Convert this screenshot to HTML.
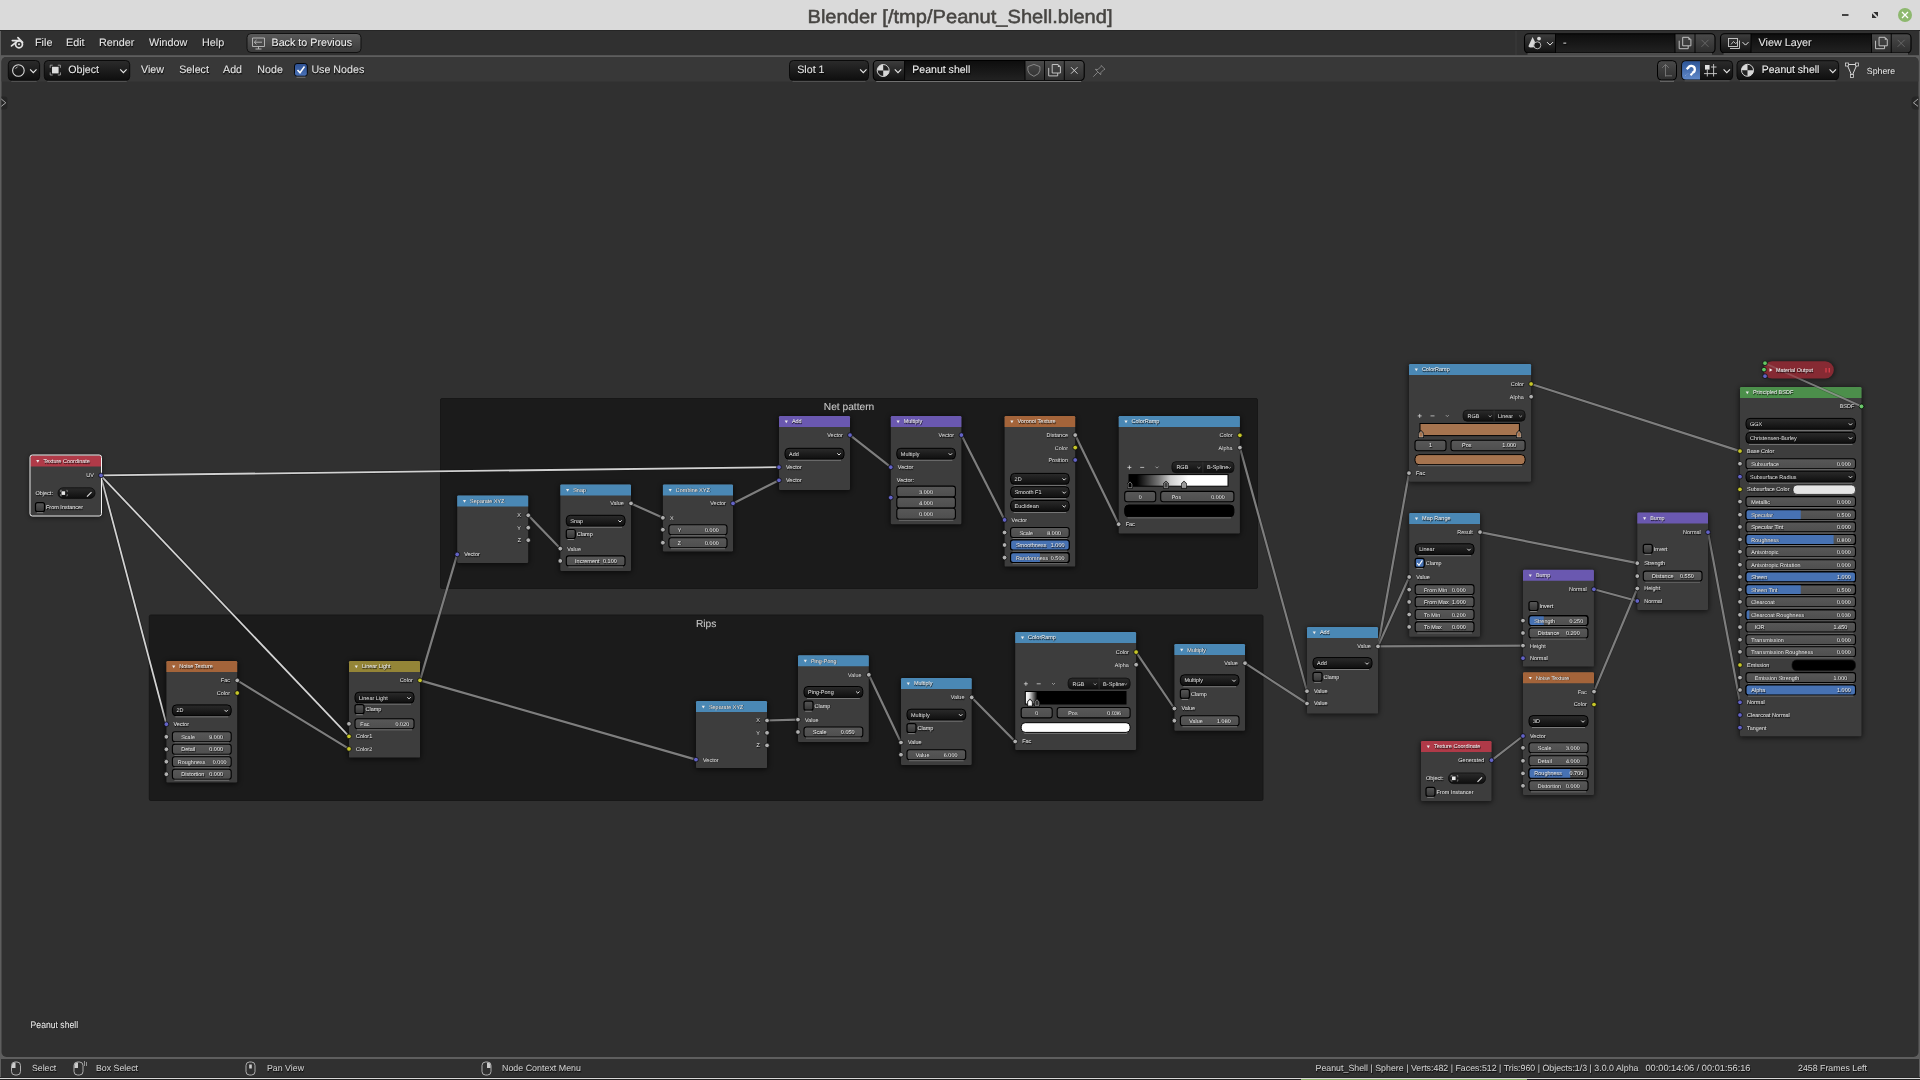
<!DOCTYPE html>
<html><head><meta charset="utf-8"><title>Blender</title>
<style>
html,body{margin:0;padding:0;background:#303030;width:1920px;height:1080px;overflow:hidden}
svg{display:block;font-family:"Liberation Sans", sans-serif;will-change:transform;text-rendering:geometricPrecision}
</style></head><body>
<svg width="1920" height="1080" viewBox="0 0 1920 1080">
<defs>
<linearGradient id="gdrop" x1="0" y1="0" x2="0" y2="1"><stop offset="0" stop-color="#2b2b2b"/><stop offset="1" stop-color="#0e0e0e"/></linearGradient>
<linearGradient id="gfield" x1="0" y1="0" x2="0" y2="1"><stop offset="0" stop-color="#585858"/><stop offset="1" stop-color="#4e4e4e"/></linearGradient>
<linearGradient id="gcheck" x1="0" y1="0" x2="0" y2="1"><stop offset="0" stop-color="#575757"/><stop offset="1" stop-color="#353535"/></linearGradient>
<linearGradient id="gbtn" x1="0" y1="0" x2="0" y2="1"><stop offset="0" stop-color="#5a5a5a"/><stop offset="1" stop-color="#3a3a3a"/></linearGradient>
<linearGradient id="gdrop2" x1="0" y1="0" x2="0" y2="1"><stop offset="0" stop-color="#3e3e3e"/><stop offset="1" stop-color="#111"/></linearGradient>
<linearGradient id="gname" x1="0" y1="0" x2="0" y2="1"><stop offset="0" stop-color="#0d0d0d"/><stop offset="1" stop-color="#222"/></linearGradient>
<linearGradient id="gblue" x1="0" y1="0" x2="0" y2="1"><stop offset="0" stop-color="#2d5597"/><stop offset="1" stop-color="#6089c9"/></linearGradient>
<linearGradient id="gblue2" x1="0" y1="0" x2="0" y2="1"><stop offset="0" stop-color="#2d5092"/><stop offset="1" stop-color="#4a72b8"/></linearGradient>
<linearGradient id="gbtn2" x1="0" y1="0" x2="0" y2="1"><stop offset="0" stop-color="#4a4a4a"/><stop offset="1" stop-color="#2e2e2e"/></linearGradient>
<linearGradient id="gcr1" x1="0" y1="0" x2="1" y2="0"><stop offset="0" stop-color="#000"/><stop offset="0.08" stop-color="#000"/><stop offset="0.3" stop-color="#777"/><stop offset="0.42" stop-color="#cfcfcf"/><stop offset="0.6" stop-color="#fff"/><stop offset="1" stop-color="#fff"/></linearGradient>
<linearGradient id="gcr2" x1="0" y1="0" x2="1" y2="0"><stop offset="0" stop-color="#fff"/><stop offset="0.04" stop-color="#ddd"/><stop offset="0.12" stop-color="#000"/><stop offset="1" stop-color="#000"/></linearGradient>
<filter id="shadow" x="-20%" y="-20%" width="140%" height="140%"><feGaussianBlur stdDeviation="2.5"/></filter>
</defs>
<rect x="0" y="0" width="1920" height="1080" fill="#303030"/>
<rect x="0" y="0" width="1920" height="30" fill="#dadada"/>
<text x="960.00" y="22.50" font-size="19" text-anchor="middle" textLength="305" lengthAdjust="spacingAndGlyphs" fill="#474542" stroke="#474542" stroke-width="0.51" >Blender [/tmp/Peanut_Shell.blend]</text>
<path d="M1842 15 h6.5" stroke="#333" stroke-width="1.8"/>
<path d="M1873.3 12 H1878 V16.7 Z M1872 13.3 V18 H1876.7 Z" fill="#303030"/>
<circle cx="1905" cy="15" r="7" fill="#8db86e"/>
<path d="M1902 12 L1908 18 M1908 12 L1902 18" stroke="#fff" stroke-width="1.3"/>
<rect x="0" y="30" width="1920" height="1048" fill="#5e5e5e"/>
<rect x="1" y="30" width="1918" height="25.2" fill="#303030"/><rect x="0" y="30" width="1920" height="1" fill="#252525"/>
<rect x="1.5" y="57" width="1917" height="1000" rx="5" fill="#303030"/>
<path d="M1.5 81.5 V62 Q1.5 57 6.5 57 H1913.5 Q1918.5 57 1918.5 62 V81.5 Z" fill="#383838"/>
<g fill="none" stroke="#e2e2e2" stroke-linecap="round"><circle cx="19" cy="44.3" r="3.45" stroke-width="1.75"/><circle cx="19" cy="44.3" r="1.05" fill="#e2e2e2" stroke="none"/><path d="M17.9 37.6 L22.6 42.4 M12.3 40.6 H18.8 M11.5 45.9 L15.9 42.5" stroke-width="1.65"/></g>
<text x="35.45" y="46.50" font-size="10.8" text-anchor="start" fill="#000" fill-opacity="0.6" stroke="#000" stroke-opacity="0.25" stroke-width="1.30" >File</text><text x="35.00" y="45.90" font-size="10.8" text-anchor="start" fill="#e6e6e6" stroke="#e6e6e6" stroke-width="0.09" >File</text>
<text x="66.45" y="46.50" font-size="10.8" text-anchor="start" fill="#000" fill-opacity="0.6" stroke="#000" stroke-opacity="0.25" stroke-width="1.30" >Edit</text><text x="66.00" y="45.90" font-size="10.8" text-anchor="start" fill="#e6e6e6" stroke="#e6e6e6" stroke-width="0.09" >Edit</text>
<text x="99.45" y="46.50" font-size="10.8" text-anchor="start" fill="#000" fill-opacity="0.6" stroke="#000" stroke-opacity="0.25" stroke-width="1.30" >Render</text><text x="99.00" y="45.90" font-size="10.8" text-anchor="start" fill="#e6e6e6" stroke="#e6e6e6" stroke-width="0.09" >Render</text>
<text x="149.45" y="46.50" font-size="10.8" text-anchor="start" fill="#000" fill-opacity="0.6" stroke="#000" stroke-opacity="0.25" stroke-width="1.30" >Window</text><text x="149.00" y="45.90" font-size="10.8" text-anchor="start" fill="#e6e6e6" stroke="#e6e6e6" stroke-width="0.09" >Window</text>
<text x="202.45" y="46.50" font-size="10.8" text-anchor="start" fill="#000" fill-opacity="0.6" stroke="#000" stroke-opacity="0.25" stroke-width="1.30" >Help</text><text x="202.00" y="45.90" font-size="10.8" text-anchor="start" fill="#e6e6e6" stroke="#e6e6e6" stroke-width="0.09" >Help</text>
<rect x="247" y="33.5" width="114" height="19" rx="4" fill="url(#gbtn)" stroke="#111" stroke-width="1"/>
<path d="M252.5 38 h12 v8.5 h-12 Z M258.5 46.5 v2.5 M255.5 49 h6 M262 42.2 h-7.5 M256.5 40 l-2.2 2.2 l2.2 2.2" stroke="#bdbdbd" stroke-width="0.9" fill="none"/>
<text x="271.95" y="46.50" font-size="10.8" text-anchor="start" textLength="80.5" lengthAdjust="spacingAndGlyphs" fill="#000" fill-opacity="0.6" stroke="#000" stroke-opacity="0.25" stroke-width="1.30" >Back to Previous</text><text x="271.50" y="45.90" font-size="10.8" text-anchor="start" textLength="80.5" lengthAdjust="spacingAndGlyphs" fill="#f0f0f0" stroke="#f0f0f0" stroke-width="0.09" >Back to Previous</text>
<path d="M1516 31 V55" stroke="#3a3a3a" stroke-width="1"/>
<clipPath id="idc20"><rect x="1524.5" y="33.7" width="190.5" height="19.299999999999997" rx="4"/></clipPath>
<g clip-path="url(#idc20)"><rect x="1524.5" y="33.7" width="31.0" height="19.299999999999997" fill="url(#gdrop2)"/><rect x="1555.5" y="33.7" width="119.5" height="19.299999999999997" fill="url(#gname)"/><rect x="1675" y="33.7" width="40" height="19.299999999999997" fill="url(#gbtn2)"/></g>
<rect x="1524.5" y="33.7" width="190.5" height="19.299999999999997" rx="4" fill="none" stroke="#000" stroke-width="1.1"/>
<path d="M1555.5 33.7 V53 M1675 33.7 V53 M1695.0 33.7 V53" stroke="#000" stroke-width="0.9"/>
<path d="M1527.5 53.9 H1712" stroke="#8a8a8a" stroke-width="0.8"/>
<path d="M1679.2 40.699999999999996 V48.699999999999996 H1688.2 V45.9" stroke="#c8c8c8" stroke-width="0.95" fill="none"/><path d="M1682.7 37.3 H1688.6 L1690.9 39.599999999999994 V45.8 H1682.7 Z" stroke="#c8c8c8" stroke-width="0.95" fill="none"/><path d="M1688.4 37.3 L1690.9 39.8 H1688.4 Z" fill="#c8c8c8"/>
<path d="M1701.5 39.8 L1708.5 46.8 M1708.5 39.8 L1701.5 46.8" stroke="#6a6a6a" stroke-width="0.9"/>
<path d="M1547.0 42.099999999999994 l3 3 l3 -3" stroke="#e8e8e8" stroke-width="1" fill="none"/>
<text x="1563.45" y="46.70" font-size="10.8" text-anchor="start" fill="#000" fill-opacity="0.6" stroke="#000" stroke-opacity="0.25" stroke-width="1.30" >-</text><text x="1563.00" y="46.10" font-size="10.8" text-anchor="start" fill="#e6e6e6" stroke="#e6e6e6" stroke-width="0.09" >-</text>
<clipPath id="idc29"><rect x="1720.5" y="33.7" width="190.5" height="19.299999999999997" rx="4"/></clipPath>
<g clip-path="url(#idc29)"><rect x="1720.5" y="33.7" width="30.5" height="19.299999999999997" fill="url(#gdrop2)"/><rect x="1751" y="33.7" width="120.5" height="19.299999999999997" fill="url(#gname)"/><rect x="1871.5" y="33.7" width="39.5" height="19.299999999999997" fill="url(#gbtn2)"/></g>
<rect x="1720.5" y="33.7" width="190.5" height="19.299999999999997" rx="4" fill="none" stroke="#000" stroke-width="1.1"/>
<path d="M1751 33.7 V53 M1871.5 33.7 V53 M1891.25 33.7 V53" stroke="#000" stroke-width="0.9"/>
<path d="M1723.5 53.9 H1908" stroke="#8a8a8a" stroke-width="0.8"/>
<path d="M1875.575 40.699999999999996 V48.699999999999996 H1884.575 V45.9" stroke="#c8c8c8" stroke-width="0.95" fill="none"/><path d="M1879.075 37.3 H1884.975 L1887.275 39.599999999999994 V45.8 H1879.075 Z" stroke="#c8c8c8" stroke-width="0.95" fill="none"/><path d="M1884.775 37.3 L1887.275 39.8 H1884.775 Z" fill="#c8c8c8"/>
<path d="M1897.625 39.8 L1904.625 46.8 M1904.625 39.8 L1897.625 46.8" stroke="#6a6a6a" stroke-width="0.9"/>
<path d="M1742.5 42.099999999999994 l3 3 l3 -3" stroke="#e8e8e8" stroke-width="1" fill="none"/>
<text x="1758.95" y="46.70" font-size="10.8" text-anchor="start" fill="#000" fill-opacity="0.6" stroke="#000" stroke-opacity="0.25" stroke-width="1.30" >View Layer</text><text x="1758.50" y="46.10" font-size="10.8" text-anchor="start" fill="#e6e6e6" stroke="#e6e6e6" stroke-width="0.09" >View Layer</text>
<g fill="#d8d8d8"><path d="M1528.5 46 Q1528.3 47.3 1530.5 47.5 L1534.2 47.3 L1536 44 L1532.6 37 Z"/><circle cx="1539" cy="38.6" r="1.9"/><circle cx="1537.3" cy="45.3" r="3.5" fill="#181818" stroke="#c8c8c8" stroke-width="0.9"/></g>
<g fill="none" stroke="#d0d0d0" stroke-width="0.9"><rect x="1728.5" y="38.5" width="9" height="8"/><path d="M1730 48.5 h9.5 v-8 M1731 44.5 l2.5 -3 l2 2 l1.5 -1"/></g>
<rect x="8.3" y="60.5" width="31.3" height="20.0" rx="4" fill="url(#gdrop)" stroke="#0a0a0a" stroke-width="1"/>
<path d="M11.3 81.3 H36.6" stroke="#5d5d5d" stroke-width="0.9"/>
<path d="M30.099999999999998 69.4 L33.3 72.6 L36.5 69.4" stroke="#e8e8e8" stroke-width="1.1" fill="none"/>
<circle cx="18.4" cy="70.5" r="5.8" fill="none" stroke="#d8d8d8" stroke-width="1.1"/><path d="M15.5 68.5 l1.5 -1.2 M17.5 67 l0.6 -0.3" stroke="#d8d8d8" stroke-width="0.8"/>
<rect x="44.3" y="60.5" width="85.39999999999999" height="20.0" rx="4" fill="url(#gdrop)" stroke="#0a0a0a" stroke-width="1"/>
<path d="M47.3 81.3 H126.69999999999999" stroke="#5d5d5d" stroke-width="0.9"/>
<path d="M120.2 69.4 L123.4 72.6 L126.60000000000001 69.4" stroke="#e8e8e8" stroke-width="1.1" fill="none"/>
<rect x="52" y="66.8" width="6.6" height="6.6" fill="#dcdcdc"/><path d="M50.2 67.8 v-2.6 h2.5 M57.8 65.2 h2.6 v2.6 M50.2 72.4 v2.6 h2.5 M57.8 75 h2.6 v-2.6" stroke="#b0b0b0" stroke-width="0.8" fill="none"/>
<text x="68.65" y="73.60" font-size="10.7" text-anchor="start" fill="#000" fill-opacity="0.6" stroke="#000" stroke-opacity="0.25" stroke-width="1.28" >Object</text><text x="68.20" y="73.00" font-size="10.7" text-anchor="start" fill="#e6e6e6" stroke="#e6e6e6" stroke-width="0.09" >Object</text>
<text x="141.45" y="73.60" font-size="10.7" text-anchor="start" fill="#000" fill-opacity="0.6" stroke="#000" stroke-opacity="0.25" stroke-width="1.28" >View</text><text x="141.00" y="73.00" font-size="10.7" text-anchor="start" fill="#e6e6e6" stroke="#e6e6e6" stroke-width="0.09" >View</text>
<text x="179.65" y="73.60" font-size="10.7" text-anchor="start" fill="#000" fill-opacity="0.6" stroke="#000" stroke-opacity="0.25" stroke-width="1.28" >Select</text><text x="179.20" y="73.00" font-size="10.7" text-anchor="start" fill="#e6e6e6" stroke="#e6e6e6" stroke-width="0.09" >Select</text>
<text x="223.45" y="73.60" font-size="10.7" text-anchor="start" fill="#000" fill-opacity="0.6" stroke="#000" stroke-opacity="0.25" stroke-width="1.28" >Add</text><text x="223.00" y="73.00" font-size="10.7" text-anchor="start" fill="#e6e6e6" stroke="#e6e6e6" stroke-width="0.09" >Add</text>
<text x="257.75" y="73.60" font-size="10.7" text-anchor="start" fill="#000" fill-opacity="0.6" stroke="#000" stroke-opacity="0.25" stroke-width="1.28" >Node</text><text x="257.30" y="73.00" font-size="10.7" text-anchor="start" fill="#e6e6e6" stroke="#e6e6e6" stroke-width="0.09" >Node</text>
<rect x="294.5" y="63.5" width="12.8" height="12.7" rx="2.5" fill="url(#gblue2)" stroke="#000" stroke-width="0.9"/><path d="M296.5 77.2 H305.5" stroke="#8a8a8a" stroke-width="0.8"/>
<path d="M297.5 70 L300 72.8 L304.5 66.5" stroke="#fff" stroke-width="1.5" fill="none"/>
<text x="311.85" y="73.60" font-size="10.7" text-anchor="start" fill="#000" fill-opacity="0.6" stroke="#000" stroke-opacity="0.25" stroke-width="1.28" >Use Nodes</text><text x="311.40" y="73.00" font-size="10.7" text-anchor="start" fill="#e6e6e6" stroke="#e6e6e6" stroke-width="0.09" >Use Nodes</text>
<rect x="789.5" y="60.5" width="79.0" height="20.0" rx="4" fill="url(#gdrop)" stroke="#0a0a0a" stroke-width="1"/>
<path d="M792.5 81.3 H865.5" stroke="#5d5d5d" stroke-width="0.9"/>
<path d="M860.0999999999999 69.4 L863.3 72.6 L866.5 69.4" stroke="#e8e8e8" stroke-width="1.1" fill="none"/>
<text x="797.65" y="73.60" font-size="10.7" text-anchor="start" fill="#000" fill-opacity="0.6" stroke="#000" stroke-opacity="0.25" stroke-width="1.28" >Slot 1</text><text x="797.20" y="73.00" font-size="10.7" text-anchor="start" fill="#e6e6e6" stroke="#e6e6e6" stroke-width="0.09" >Slot 1</text>
<clipPath id="idc60"><rect x="873.3" y="60.5" width="210.9000000000001" height="20.0" rx="4"/></clipPath>
<g clip-path="url(#idc60)"><rect x="873.3" y="60.5" width="31.300000000000068" height="20.0" fill="url(#gdrop2)"/><rect x="904.6" y="60.5" width="120.39999999999998" height="20.0" fill="url(#gname)"/><rect x="1025" y="60.5" width="59.200000000000045" height="20.0" fill="url(#gbtn2)"/></g>
<rect x="873.3" y="60.5" width="210.9000000000001" height="20.0" rx="4" fill="none" stroke="#000" stroke-width="1.1"/>
<path d="M904.6 60.5 V80.5 M1025 60.5 V80.5 M1044.5 60.5 V80.5 M1064.3 60.5 V80.5" stroke="#000" stroke-width="0.9"/>
<path d="M876.3 81.4 H1081.2" stroke="#8a8a8a" stroke-width="0.8"/>
<circle cx="883.2" cy="70.5" r="6" fill="#222" stroke="#d8d8d8" stroke-width="1"/><path d="M883.2 64.5 A6 6 0 0 0 877.2 70.5 H883.2 Z M883.2 70.5 H889.2 A6 6 0 0 1 883.2 76.5 Z" fill="#d8d8d8"/>
<path d="M894.8 69.4 L898 72.6 L901.2 69.4" stroke="#e8e8e8" stroke-width="1.1" fill="none"/>
<text x="912.75" y="73.60" font-size="10.7" text-anchor="start" textLength="58" lengthAdjust="spacingAndGlyphs" fill="#000" fill-opacity="0.6" stroke="#000" stroke-opacity="0.25" stroke-width="1.28" >Peanut shell</text><text x="912.30" y="73.00" font-size="10.7" text-anchor="start" textLength="58" lengthAdjust="spacingAndGlyphs" fill="#f0f0f0" stroke="#f0f0f0" stroke-width="0.09" >Peanut shell</text>
<path d="M1033.9 64.4 L1039.9 66.6 V70.3 Q1039.9 74 1033.9 76.3 Q1027.9 74 1027.9 70.3 V66.6 Z" stroke="#8a8a8a" stroke-width="0.95" fill="none"/>
<path d="M1048.7 67.9 V75.9 H1057.7 V73.1" stroke="#c8c8c8" stroke-width="0.95" fill="none"/><path d="M1052.2 64.5 H1058.1 L1060.4 66.8 V73.0 H1052.2 Z" stroke="#c8c8c8" stroke-width="0.95" fill="none"/><path d="M1057.9 64.5 L1060.4 67.0 H1057.9 Z" fill="#c8c8c8"/>
<path d="M1071 67.2 L1077.5 73.7 M1077.5 67.2 L1071 73.7" stroke="#d0d0d0" stroke-width="1"/>
<path d="M1095.3 69.3 L1100.7 74.7 L1100.9 72.6 L1103.9 69.6 L1105 69.3 L1101.2 65.5 L1100.9 66.6 L1097.9 69.6 Z M1093.3 76.7 L1097.7 72.3" stroke="#8a8a8a" stroke-width="0.9" fill="none" stroke-linejoin="round"/>
<rect x="1657.5" y="60.7" width="19" height="19.3" rx="4" fill="url(#gbtn2)" stroke="#000" stroke-width="1"/>
<path d="M1660 81.2 H1674" stroke="#8a8a8a" stroke-width="0.8"/>
<path d="M1665.5 76.5 V64.5 M1662.2 67.8 L1665.5 64.5 L1668.8 67.8 M1665.5 75.8 H1672" stroke="#7a7a7a" stroke-width="0.9" fill="none"/>
<rect x="1681.6" y="60.7" width="51.0" height="19.299999999999997" rx="4" fill="url(#gdrop)" stroke="#0a0a0a" stroke-width="1"/>
<path d="M1684.6 80.8 H1729.6" stroke="#5d5d5d" stroke-width="0.9"/>
<path d="M1686 61.2 H1700 V79.5 H1686 Q1682.1 79.5 1682.1 75.5 V65.2 Q1682.1 61.2 1686 61.2 Z" fill="url(#gblue)"/>
<path d="M1687.9 68.7 A3.5 3.5 0 1 1 1691.9 72.8" stroke="#fff" stroke-width="2.3" fill="none"/>
<path d="M1686.6 67.8 l1.8 1.2 M1690.7 73.6 l1.3 1.6" stroke="#fff" stroke-width="2.3"/>
<path d="M1685.5 75.5 l0.6 -0.6 M1687.3 74.2 l0.5 -0.5" stroke="#dde" stroke-width="0.6"/>
<rect x="1705" y="65" width="4.6" height="4.6" fill="#e0e0e0"/><path d="M1707.3 69.6 V76.5 M1713.6 64 V76.5 M1704 73.6 H1717 M1711 67 H1716.5" stroke="#cfcfcf" stroke-width="0.9" fill="none"/>
<path d="M1723.6 69.4 L1726.8 72.6 L1730.0 69.4" stroke="#e8e8e8" stroke-width="1.1" fill="none"/>
<rect x="1737" y="60.7" width="101.59999999999991" height="19.299999999999997" rx="4" fill="url(#gdrop)" stroke="#0a0a0a" stroke-width="1"/>
<path d="M1740 80.8 H1835.6" stroke="#5d5d5d" stroke-width="0.9"/>
<circle cx="1747.5" cy="70.3" r="6" fill="#222" stroke="#d8d8d8" stroke-width="1"/><path d="M1747.5 64.3 A6 6 0 0 0 1741.5 70.3 H1747.5 Z M1747.5 70.3 H1753.5 A6 6 0 0 1 1747.5 76.3 Z" fill="#d8d8d8"/>
<text x="1762.25" y="73.60" font-size="10.7" text-anchor="start" textLength="57.6" lengthAdjust="spacingAndGlyphs" fill="#000" fill-opacity="0.6" stroke="#000" stroke-opacity="0.25" stroke-width="1.28" >Peanut shell</text><text x="1761.80" y="73.00" font-size="10.7" text-anchor="start" textLength="57.6" lengthAdjust="spacingAndGlyphs" fill="#f0f0f0" stroke="#f0f0f0" stroke-width="0.09" >Peanut shell</text>
<path d="M1829.6 69.4 L1832.8 72.6 L1836.0 69.4" stroke="#e8e8e8" stroke-width="1.1" fill="none"/>
<path d="M1847 64.5 L1857 64.5 L1852 76 Z" stroke="#d8d8d8" stroke-width="1" fill="none"/><g fill="#303030" stroke="#d8d8d8" stroke-width="0.8"><rect x="1845.5" y="63" width="3" height="3"/><rect x="1855.5" y="63" width="3" height="3"/><rect x="1850.5" y="74.5" width="3" height="3"/></g>
<text x="1867.25" y="74.40" font-size="8.8" text-anchor="start" textLength="28.4" lengthAdjust="spacingAndGlyphs" fill="#000" fill-opacity="0.6" stroke="#000" stroke-opacity="0.25" stroke-width="1.06" >Sphere</text><text x="1866.80" y="73.80" font-size="8.8" text-anchor="start" textLength="28.4" lengthAdjust="spacingAndGlyphs" fill="#e6e6e6" stroke="#e6e6e6" stroke-width="0.07" >Sphere</text>
<path d="M1.5 96.5 H4.5 Q7.5 96.5 7.5 99.5 V106.5 Q7.5 109.5 4.5 109.5 H1.5 Z" fill="#262626"/>
<path d="M1.3 99 L5.8 102.8 L1.3 106.3" stroke="#a8a8a8" stroke-width="1" fill="none"/>
<path d="M1918.5 96.5 H1915.5 Q1911.5 96.5 1911.5 100 V106 Q1911.5 109.5 1915.5 109.5 H1918.5 Z" fill="#262626"/>
<path d="M1918 99 L1913.4 102.8 L1918 106.3" stroke="#a8a8a8" stroke-width="1" fill="none"/>
<text x="31.05" y="1028.40" font-size="9.6" text-anchor="start" textLength="47.5" lengthAdjust="spacingAndGlyphs" fill="#000" fill-opacity="0.6" stroke="#000" stroke-opacity="0.25" stroke-width="1.15" >Peanut shell</text><text x="30.60" y="1027.80" font-size="9.6" text-anchor="start" textLength="47.5" lengthAdjust="spacingAndGlyphs" fill="#ececec" stroke="#ececec" stroke-width="0.08" >Peanut shell</text>
<rect x="1" y="1059" width="1918" height="19" fill="#303030"/>
<rect x="0" y="1077" width="1920" height="1" fill="#262626"/>
<rect x="0" y="1078" width="1920" height="1" fill="#d8d8d8"/>
<rect x="0" y="1079" width="1920" height="1" fill="#222"/>
<rect x="1301" y="1079" width="226" height="1" fill="#8db56b"/>
<rect x="11.5" y="1062" width="9" height="13" rx="3.5" fill="none" stroke="#bbb" stroke-width="0.9"/>
<path d="M12.0 1068 V1065 Q12.0 1062.5 15.5 1062.5 V1068 Z" fill="#ccc"/>
<text x="32.45" y="1071.50" font-size="8.8" text-anchor="start" textLength="24.2" lengthAdjust="spacingAndGlyphs" fill="#000" fill-opacity="0.6" stroke="#000" stroke-opacity="0.25" stroke-width="1.06" >Select</text><text x="32.00" y="1070.90" font-size="8.8" text-anchor="start" textLength="24.2" lengthAdjust="spacingAndGlyphs" fill="#d0d0d0" stroke="#d0d0d0" stroke-width="0.07" >Select</text>
<rect x="74" y="1062" width="9" height="13" rx="3.5" fill="none" stroke="#bbb" stroke-width="0.9"/>
<path d="M74.5 1068 V1065 Q74.5 1062.5 78 1062.5 V1068 Z" fill="#ccc"/>
<path d="M84.5 1061 v5 M86.5 1062 v4" stroke="#bbb" stroke-width="0.7"/>
<text x="96.45" y="1071.50" font-size="8.8" text-anchor="start" textLength="42" lengthAdjust="spacingAndGlyphs" fill="#000" fill-opacity="0.6" stroke="#000" stroke-opacity="0.25" stroke-width="1.06" >Box Select</text><text x="96.00" y="1070.90" font-size="8.8" text-anchor="start" textLength="42" lengthAdjust="spacingAndGlyphs" fill="#d0d0d0" stroke="#d0d0d0" stroke-width="0.07" >Box Select</text>
<rect x="246" y="1062" width="9" height="13" rx="3.5" fill="none" stroke="#bbb" stroke-width="0.9"/>
<rect x="249.2" y="1064.5" width="2.6" height="4" fill="#ccc"/>
<text x="267.45" y="1071.50" font-size="8.8" text-anchor="start" textLength="37" lengthAdjust="spacingAndGlyphs" fill="#000" fill-opacity="0.6" stroke="#000" stroke-opacity="0.25" stroke-width="1.06" >Pan View</text><text x="267.00" y="1070.90" font-size="8.8" text-anchor="start" textLength="37" lengthAdjust="spacingAndGlyphs" fill="#d0d0d0" stroke="#d0d0d0" stroke-width="0.07" >Pan View</text>
<rect x="482" y="1062" width="9" height="13" rx="3.5" fill="none" stroke="#bbb" stroke-width="0.9"/>
<path d="M490.5 1068 V1065 Q490.5 1062.5 487 1062.5 V1068 Z" fill="#ccc"/>
<text x="502.45" y="1071.50" font-size="8.8" text-anchor="start" textLength="79" lengthAdjust="spacingAndGlyphs" fill="#000" fill-opacity="0.6" stroke="#000" stroke-opacity="0.25" stroke-width="1.06" >Node Context Menu</text><text x="502.00" y="1070.90" font-size="8.8" text-anchor="start" textLength="79" lengthAdjust="spacingAndGlyphs" fill="#d0d0d0" stroke="#d0d0d0" stroke-width="0.07" >Node Context Menu</text>
<text x="1315.95" y="1071.50" font-size="8.8" text-anchor="start" textLength="323" lengthAdjust="spacingAndGlyphs" fill="#000" fill-opacity="0.6" stroke="#000" stroke-opacity="0.25" stroke-width="1.06" >Peanut_Shell | Sphere | Verts:482 | Faces:512 | Tris:960 | Objects:1/3 | 3.0.0 Alpha</text><text x="1315.50" y="1070.90" font-size="8.8" text-anchor="start" textLength="323" lengthAdjust="spacingAndGlyphs" fill="#d0d0d0" stroke="#d0d0d0" stroke-width="0.07" >Peanut_Shell | Sphere | Verts:482 | Faces:512 | Tris:960 | Objects:1/3 | 3.0.0 Alpha</text>
<text x="1645.95" y="1071.50" font-size="8.8" text-anchor="start" textLength="105" lengthAdjust="spacingAndGlyphs" fill="#000" fill-opacity="0.6" stroke="#000" stroke-opacity="0.25" stroke-width="1.06" >00:00:14:06 / 00:01:56:16</text><text x="1645.50" y="1070.90" font-size="8.8" text-anchor="start" textLength="105" lengthAdjust="spacingAndGlyphs" fill="#d0d0d0" stroke="#d0d0d0" stroke-width="0.07" >00:00:14:06 / 00:01:56:16</text>
<text x="1798.45" y="1071.50" font-size="8.8" text-anchor="start" textLength="69" lengthAdjust="spacingAndGlyphs" fill="#000" fill-opacity="0.6" stroke="#000" stroke-opacity="0.25" stroke-width="1.06" >2458 Frames Left</text><text x="1798.00" y="1070.90" font-size="8.8" text-anchor="start" textLength="69" lengthAdjust="spacingAndGlyphs" fill="#d0d0d0" stroke="#d0d0d0" stroke-width="0.07" >2458 Frames Left</text>
<rect x="440.5" y="398.5" width="817.0" height="190.0" rx="1.5" fill="#1b1b1b" stroke="#171717" stroke-width="1"/>
<text x="849.00" y="410.00" font-size="10.2" text-anchor="middle" fill="#c8c8c8" stroke="#c8c8c8" stroke-width="0.09" >Net pattern</text>
<rect x="149.3" y="615" width="1113.7" height="185.5" rx="1.5" fill="#1b1b1b" stroke="#171717" stroke-width="1"/>
<text x="706.15" y="627.00" font-size="10.2" text-anchor="middle" fill="#c8c8c8" stroke="#c8c8c8" stroke-width="0.09" >Rips</text>
<path d="M100.60 475.40 L779.00 467.20" stroke="#111" stroke-opacity="0.55" stroke-width="3.2" fill="none"/>
<path d="M100.60 475.40 L779.00 467.20" stroke="#d2d2d2" stroke-width="1.8" fill="none"/>
<path d="M100.60 475.40 L166.40 724.20" stroke="#111" stroke-opacity="0.55" stroke-width="3.2" fill="none"/>
<path d="M100.60 475.40 L166.40 724.20" stroke="#d2d2d2" stroke-width="1.8" fill="none"/>
<path d="M100.60 475.40 L349.00 736.40" stroke="#111" stroke-opacity="0.55" stroke-width="3.2" fill="none"/>
<path d="M100.60 475.40 L349.00 736.40" stroke="#d2d2d2" stroke-width="1.8" fill="none"/>
<path d="M237.20 680.40 L349.00 748.90" stroke="#111" stroke-opacity="0.55" stroke-width="3.2" fill="none"/>
<path d="M237.20 680.40 L349.00 748.90" stroke="#7e7e7e" stroke-width="2.2" fill="none"/>
<path d="M420.00 680.40 L457.20 554.40" stroke="#111" stroke-opacity="0.55" stroke-width="3.2" fill="none"/>
<path d="M420.00 680.40 L457.20 554.40" stroke="#7e7e7e" stroke-width="2.2" fill="none"/>
<path d="M420.00 680.40 L696.00 759.60" stroke="#111" stroke-opacity="0.55" stroke-width="3.2" fill="none"/>
<path d="M420.00 680.40 L696.00 759.60" stroke="#7e7e7e" stroke-width="2.2" fill="none"/>
<path d="M528.20 515.30 L560.30 548.60" stroke="#111" stroke-opacity="0.55" stroke-width="3.2" fill="none"/>
<path d="M528.20 515.30 L560.30 548.60" stroke="#7e7e7e" stroke-width="2.2" fill="none"/>
<path d="M631.00 503.40 L662.90 517.80" stroke="#111" stroke-opacity="0.55" stroke-width="3.2" fill="none"/>
<path d="M631.00 503.40 L662.90 517.80" stroke="#7e7e7e" stroke-width="2.2" fill="none"/>
<path d="M733.00 503.40 L779.00 480.30" stroke="#111" stroke-opacity="0.55" stroke-width="3.2" fill="none"/>
<path d="M733.00 503.40 L779.00 480.30" stroke="#7e7e7e" stroke-width="2.2" fill="none"/>
<path d="M850.00 435.10 L890.80 467.20" stroke="#111" stroke-opacity="0.55" stroke-width="3.2" fill="none"/>
<path d="M850.00 435.10 L890.80 467.20" stroke="#7e7e7e" stroke-width="2.2" fill="none"/>
<path d="M961.40 435.00 L1004.60 519.90" stroke="#111" stroke-opacity="0.55" stroke-width="3.2" fill="none"/>
<path d="M961.40 435.00 L1004.60 519.90" stroke="#7e7e7e" stroke-width="2.2" fill="none"/>
<path d="M1075.20 435.10 L1118.70 524.20" stroke="#111" stroke-opacity="0.55" stroke-width="3.2" fill="none"/>
<path d="M1075.20 435.10 L1118.70 524.20" stroke="#7e7e7e" stroke-width="2.2" fill="none"/>
<path d="M1239.90 447.60 L1307.00 691.20" stroke="#111" stroke-opacity="0.55" stroke-width="3.2" fill="none"/>
<path d="M1239.90 447.60 L1307.00 691.20" stroke="#7e7e7e" stroke-width="2.2" fill="none"/>
<path d="M766.10 720.50 L798.00 719.60" stroke="#111" stroke-opacity="0.55" stroke-width="3.2" fill="none"/>
<path d="M766.10 720.50 L798.00 719.60" stroke="#7e7e7e" stroke-width="2.2" fill="none"/>
<path d="M868.80 674.80 L901.00 742.50" stroke="#111" stroke-opacity="0.55" stroke-width="3.2" fill="none"/>
<path d="M868.80 674.80 L901.00 742.50" stroke="#7e7e7e" stroke-width="2.2" fill="none"/>
<path d="M971.70 697.40 L1015.20 741.50" stroke="#111" stroke-opacity="0.55" stroke-width="3.2" fill="none"/>
<path d="M971.70 697.40 L1015.20 741.50" stroke="#7e7e7e" stroke-width="2.2" fill="none"/>
<path d="M1136.10 652.10 L1174.40 708.50" stroke="#111" stroke-opacity="0.55" stroke-width="3.2" fill="none"/>
<path d="M1136.10 652.10 L1174.40 708.50" stroke="#7e7e7e" stroke-width="2.2" fill="none"/>
<path d="M1245.00 663.20 L1307.00 703.50" stroke="#111" stroke-opacity="0.55" stroke-width="3.2" fill="none"/>
<path d="M1245.00 663.20 L1307.00 703.50" stroke="#7e7e7e" stroke-width="2.2" fill="none"/>
<path d="M1378.00 646.40 L1409.00 473.10" stroke="#111" stroke-opacity="0.55" stroke-width="3.2" fill="none"/>
<path d="M1378.00 646.40 L1409.00 473.10" stroke="#7e7e7e" stroke-width="2.2" fill="none"/>
<path d="M1378.00 646.40 L1409.20 577.00" stroke="#111" stroke-opacity="0.55" stroke-width="3.2" fill="none"/>
<path d="M1378.00 646.40 L1409.20 577.00" stroke="#7e7e7e" stroke-width="2.2" fill="none"/>
<path d="M1378.00 646.40 L1523.00 645.60" stroke="#111" stroke-opacity="0.55" stroke-width="3.2" fill="none"/>
<path d="M1378.00 646.40 L1523.00 645.60" stroke="#7e7e7e" stroke-width="2.2" fill="none"/>
<path d="M1531.10 384.00 L1740.00 451.10" stroke="#111" stroke-opacity="0.55" stroke-width="3.2" fill="none"/>
<path d="M1531.10 384.00 L1740.00 451.10" stroke="#7e7e7e" stroke-width="2.2" fill="none"/>
<path d="M1480.00 532.10 L1637.30 563.20" stroke="#111" stroke-opacity="0.55" stroke-width="3.2" fill="none"/>
<path d="M1480.00 532.10 L1637.30 563.20" stroke="#7e7e7e" stroke-width="2.2" fill="none"/>
<path d="M1593.90 589.30 L1637.30 601.00" stroke="#111" stroke-opacity="0.55" stroke-width="3.2" fill="none"/>
<path d="M1593.90 589.30 L1637.30 601.00" stroke="#7e7e7e" stroke-width="2.2" fill="none"/>
<path d="M1594.00 691.60 L1637.30 588.50" stroke="#111" stroke-opacity="0.55" stroke-width="3.2" fill="none"/>
<path d="M1594.00 691.60 L1637.30 588.50" stroke="#7e7e7e" stroke-width="2.2" fill="none"/>
<path d="M1491.90 760.20 L1523.00 736.00" stroke="#111" stroke-opacity="0.55" stroke-width="3.2" fill="none"/>
<path d="M1491.90 760.20 L1523.00 736.00" stroke="#7e7e7e" stroke-width="2.2" fill="none"/>
<path d="M1708.00 532.20 L1740.00 702.30" stroke="#111" stroke-opacity="0.55" stroke-width="3.2" fill="none"/>
<path d="M1708.00 532.20 L1740.00 702.30" stroke="#7e7e7e" stroke-width="2.2" fill="none"/>
<rect x="29.50" y="455.50" width="72.50" height="62.00" rx="4" fill="#000" opacity="0.55" filter="url(#shadow)"/>
<path d="M30.50 456.70 Q30.50 455.50 31.70 455.50 H99.80 Q101.00 455.50 101.00 456.70 V514.30 Q101.00 515.50 99.80 515.50 H31.70 Q30.50 515.50 30.50 514.30 Z" fill="#3d3d3d"/>
<path d="M30.50 466.50 V456.70 Q30.50 455.50 31.70 455.50 H99.80 Q101.00 455.50 101.00 456.70 V466.50 Z" fill="#b03a48"/>
<rect x="30.00" y="455.00" width="71.50" height="61.00" rx="2.3" fill="none" stroke="#f4f4f4" stroke-width="1"/>
<path d="M36.20 460.10 H39.40 L37.80 462.80 Z" fill="#e8e8e8"/>
<text x="43.85" y="463.50" font-size="5.5" text-anchor="start" fill="#000" fill-opacity="0.6" stroke="#000" stroke-opacity="0.25" stroke-width="0.66" >Texture Coordinate</text><text x="43.40" y="462.90" font-size="5.5" text-anchor="start" fill="#ececec" stroke="#ececec" stroke-width="0.06" >Texture Coordinate</text>
<text x="94.25" y="477.90" font-size="5.5" text-anchor="end" fill="#000" fill-opacity="0.6" stroke="#000" stroke-opacity="0.25" stroke-width="0.66" >UV</text><text x="93.80" y="477.30" font-size="5.5" text-anchor="end" fill="#dedede" stroke="#dedede" stroke-width="0.06" >UV</text>
<circle cx="101.00" cy="475.40" r="2.35" fill="#6363c7" stroke="#0d0d0d" stroke-width="0.8"/>
<text x="35.95" y="495.60" font-size="5.5" text-anchor="start" fill="#000" fill-opacity="0.6" stroke="#000" stroke-opacity="0.25" stroke-width="0.66" >Object:</text><text x="35.50" y="495.00" font-size="5.5" text-anchor="start" fill="#e0e0e0" stroke="#e0e0e0" stroke-width="0.06" >Object:</text>
<rect x="58.00" y="487.80" width="37.00" height="10.6" rx="5" fill="url(#gdrop)" stroke="#0c0c0c" stroke-width="0.8"/>
<rect x="61.50" y="491.30" width="3.6" height="3.6" fill="#e8e8e8"/>
<path d="M60.50 492.10 v-1.8 h1.5 M66.30 490.30 h1 v1.8 M60.50 494.10 v1.8 h1.5 M66.30 495.90 h1 v-1.8" stroke="#bbb" stroke-width="0.5" fill="none"/>
<path d="M87.00 496.60 L91.50 492.10" stroke="#d8d8d8" stroke-width="1.2"/>
<rect x="35.50" y="502.70" width="9" height="9" rx="2" fill="url(#gcheck)" stroke="#000" stroke-width="1.2"/>
<path d="M36.70 512.70 H43.30" stroke="#a0a0a0" stroke-width="0.7"/>
<text x="46.45" y="509.70" font-size="5.5" text-anchor="start" fill="#000" fill-opacity="0.6" stroke="#000" stroke-opacity="0.25" stroke-width="0.66" >From Instancer</text><text x="46.00" y="509.10" font-size="5.5" text-anchor="start" fill="#e6e6e6" stroke="#e6e6e6" stroke-width="0.06" >From Instancer</text>
<rect x="1420.00" y="741.00" width="72.50" height="62.00" rx="4" fill="#000" opacity="0.55" filter="url(#shadow)"/>
<path d="M1421.00 742.20 Q1421.00 741.00 1422.20 741.00 H1490.30 Q1491.50 741.00 1491.50 742.20 V799.80 Q1491.50 801.00 1490.30 801.00 H1422.20 Q1421.00 801.00 1421.00 799.80 Z" fill="#3d3d3d"/>
<path d="M1421.00 752.00 V742.20 Q1421.00 741.00 1422.20 741.00 H1490.30 Q1491.50 741.00 1491.50 742.20 V752.00 Z" fill="#b03a48"/>
<path d="M1426.70 745.60 H1429.90 L1428.30 748.30 Z" fill="#e8e8e8"/>
<text x="1434.35" y="749.00" font-size="5.5" text-anchor="start" fill="#000" fill-opacity="0.6" stroke="#000" stroke-opacity="0.25" stroke-width="0.66" >Texture Coordinate</text><text x="1433.90" y="748.40" font-size="5.5" text-anchor="start" fill="#ececec" stroke="#ececec" stroke-width="0.06" >Texture Coordinate</text>
<text x="1484.75" y="762.70" font-size="5.5" text-anchor="end" fill="#000" fill-opacity="0.6" stroke="#000" stroke-opacity="0.25" stroke-width="0.66" >Generated</text><text x="1484.30" y="762.10" font-size="5.5" text-anchor="end" fill="#dedede" stroke="#dedede" stroke-width="0.06" >Generated</text>
<circle cx="1491.50" cy="760.20" r="2.35" fill="#6363c7" stroke="#0d0d0d" stroke-width="0.8"/>
<text x="1426.45" y="780.80" font-size="5.5" text-anchor="start" fill="#000" fill-opacity="0.6" stroke="#000" stroke-opacity="0.25" stroke-width="0.66" >Object:</text><text x="1426.00" y="780.20" font-size="5.5" text-anchor="start" fill="#e0e0e0" stroke="#e0e0e0" stroke-width="0.06" >Object:</text>
<rect x="1448.50" y="773.00" width="37.00" height="10.6" rx="5" fill="url(#gdrop)" stroke="#0c0c0c" stroke-width="0.8"/>
<rect x="1452.00" y="776.50" width="3.6" height="3.6" fill="#e8e8e8"/>
<path d="M1451.00 777.30 v-1.8 h1.5 M1456.80 775.50 h1 v1.8 M1451.00 779.30 v1.8 h1.5 M1456.80 781.10 h1 v-1.8" stroke="#bbb" stroke-width="0.5" fill="none"/>
<path d="M1477.50 781.80 L1482.00 777.30" stroke="#d8d8d8" stroke-width="1.2"/>
<rect x="1426.00" y="787.30" width="9" height="9" rx="2" fill="url(#gcheck)" stroke="#000" stroke-width="1.2"/>
<path d="M1427.20 797.30 H1433.80" stroke="#a0a0a0" stroke-width="0.7"/>
<text x="1436.95" y="794.30" font-size="5.5" text-anchor="start" fill="#000" fill-opacity="0.6" stroke="#000" stroke-opacity="0.25" stroke-width="0.66" >From Instancer</text><text x="1436.50" y="793.70" font-size="5.5" text-anchor="start" fill="#e6e6e6" stroke="#e6e6e6" stroke-width="0.06" >From Instancer</text>
<rect x="456.20" y="495.40" width="73.00" height="69.50" rx="4" fill="#000" opacity="0.55" filter="url(#shadow)"/>
<path d="M457.20 496.60 Q457.20 495.40 458.40 495.40 H527.00 Q528.20 495.40 528.20 496.60 V561.70 Q528.20 562.90 527.00 562.90 H458.40 Q457.20 562.90 457.20 561.70 Z" fill="#3d3d3d"/>
<path d="M457.20 506.40 V496.60 Q457.20 495.40 458.40 495.40 H527.00 Q528.20 495.40 528.20 496.60 V506.40 Z" fill="#4a88b5"/>
<path d="M462.90 500.00 H466.10 L464.50 502.70 Z" fill="#e8e8e8"/>
<text x="470.55" y="503.40" font-size="5.5" text-anchor="start" fill="#000" fill-opacity="0.6" stroke="#000" stroke-opacity="0.25" stroke-width="0.66" >Separate XYZ</text><text x="470.10" y="502.80" font-size="5.5" text-anchor="start" fill="#ececec" stroke="#ececec" stroke-width="0.06" >Separate XYZ</text>
<text x="521.45" y="517.80" font-size="5.5" text-anchor="end" fill="#000" fill-opacity="0.6" stroke="#000" stroke-opacity="0.25" stroke-width="0.66" >X</text><text x="521.00" y="517.20" font-size="5.5" text-anchor="end" fill="#dedede" stroke="#dedede" stroke-width="0.06" >X</text>
<text x="521.45" y="530.20" font-size="5.5" text-anchor="end" fill="#000" fill-opacity="0.6" stroke="#000" stroke-opacity="0.25" stroke-width="0.66" >Y</text><text x="521.00" y="529.60" font-size="5.5" text-anchor="end" fill="#dedede" stroke="#dedede" stroke-width="0.06" >Y</text>
<text x="521.45" y="542.70" font-size="5.5" text-anchor="end" fill="#000" fill-opacity="0.6" stroke="#000" stroke-opacity="0.25" stroke-width="0.66" >Z</text><text x="521.00" y="542.10" font-size="5.5" text-anchor="end" fill="#dedede" stroke="#dedede" stroke-width="0.06" >Z</text>
<text x="464.65" y="556.90" font-size="5.5" text-anchor="start" fill="#000" fill-opacity="0.6" stroke="#000" stroke-opacity="0.25" stroke-width="0.66" >Vector</text><text x="464.20" y="556.30" font-size="5.5" text-anchor="start" fill="#e0e0e0" stroke="#e0e0e0" stroke-width="0.06" >Vector</text>
<circle cx="528.20" cy="515.30" r="2.35" fill="#b0b0b0" stroke="#0d0d0d" stroke-width="0.8"/>
<circle cx="528.20" cy="527.70" r="2.35" fill="#b0b0b0" stroke="#0d0d0d" stroke-width="0.8"/>
<circle cx="528.20" cy="540.20" r="2.35" fill="#b0b0b0" stroke="#0d0d0d" stroke-width="0.8"/>
<circle cx="457.20" cy="554.40" r="2.35" fill="#6363c7" stroke="#0d0d0d" stroke-width="0.8"/>
<rect x="695.00" y="701.10" width="73.00" height="69.00" rx="4" fill="#000" opacity="0.55" filter="url(#shadow)"/>
<path d="M696.00 702.30 Q696.00 701.10 697.20 701.10 H765.80 Q767.00 701.10 767.00 702.30 V766.90 Q767.00 768.10 765.80 768.10 H697.20 Q696.00 768.10 696.00 766.90 Z" fill="#3d3d3d"/>
<path d="M696.00 712.10 V702.30 Q696.00 701.10 697.20 701.10 H765.80 Q767.00 701.10 767.00 702.30 V712.10 Z" fill="#4a88b5"/>
<path d="M701.70 705.70 H704.90 L703.30 708.40 Z" fill="#e8e8e8"/>
<text x="709.35" y="709.10" font-size="5.5" text-anchor="start" fill="#000" fill-opacity="0.6" stroke="#000" stroke-opacity="0.25" stroke-width="0.66" >Separate XYZ</text><text x="708.90" y="708.50" font-size="5.5" text-anchor="start" fill="#ececec" stroke="#ececec" stroke-width="0.06" >Separate XYZ</text>
<text x="760.25" y="723.00" font-size="5.5" text-anchor="end" fill="#000" fill-opacity="0.6" stroke="#000" stroke-opacity="0.25" stroke-width="0.66" >X</text><text x="759.80" y="722.40" font-size="5.5" text-anchor="end" fill="#dedede" stroke="#dedede" stroke-width="0.06" >X</text>
<text x="760.25" y="735.30" font-size="5.5" text-anchor="end" fill="#000" fill-opacity="0.6" stroke="#000" stroke-opacity="0.25" stroke-width="0.66" >Y</text><text x="759.80" y="734.70" font-size="5.5" text-anchor="end" fill="#dedede" stroke="#dedede" stroke-width="0.06" >Y</text>
<text x="760.25" y="747.90" font-size="5.5" text-anchor="end" fill="#000" fill-opacity="0.6" stroke="#000" stroke-opacity="0.25" stroke-width="0.66" >Z</text><text x="759.80" y="747.30" font-size="5.5" text-anchor="end" fill="#dedede" stroke="#dedede" stroke-width="0.06" >Z</text>
<text x="703.45" y="762.10" font-size="5.5" text-anchor="start" fill="#000" fill-opacity="0.6" stroke="#000" stroke-opacity="0.25" stroke-width="0.66" >Vector</text><text x="703.00" y="761.50" font-size="5.5" text-anchor="start" fill="#e0e0e0" stroke="#e0e0e0" stroke-width="0.06" >Vector</text>
<circle cx="767.00" cy="720.50" r="2.35" fill="#b0b0b0" stroke="#0d0d0d" stroke-width="0.8"/>
<circle cx="767.00" cy="732.80" r="2.35" fill="#b0b0b0" stroke="#0d0d0d" stroke-width="0.8"/>
<circle cx="767.00" cy="745.40" r="2.35" fill="#b0b0b0" stroke="#0d0d0d" stroke-width="0.8"/>
<circle cx="696.00" cy="759.60" r="2.35" fill="#6363c7" stroke="#0d0d0d" stroke-width="0.8"/>
<rect x="559.30" y="484.40" width="72.70" height="88.60" rx="4" fill="#000" opacity="0.55" filter="url(#shadow)"/>
<path d="M560.30 485.60 Q560.30 484.40 561.50 484.40 H629.80 Q631.00 484.40 631.00 485.60 V569.80 Q631.00 571.00 629.80 571.00 H561.50 Q560.30 571.00 560.30 569.80 Z" fill="#3d3d3d"/>
<path d="M560.30 495.40 V485.60 Q560.30 484.40 561.50 484.40 H629.80 Q631.00 484.40 631.00 485.60 V495.40 Z" fill="#4a88b5"/>
<path d="M566.00 489.00 H569.20 L567.60 491.70 Z" fill="#e8e8e8"/>
<text x="573.65" y="492.40" font-size="5.5" text-anchor="start" fill="#000" fill-opacity="0.6" stroke="#000" stroke-opacity="0.25" stroke-width="0.66" >Snap</text><text x="573.20" y="491.80" font-size="5.5" text-anchor="start" fill="#ececec" stroke="#ececec" stroke-width="0.06" >Snap</text>
<text x="624.25" y="505.90" font-size="5.5" text-anchor="end" fill="#000" fill-opacity="0.6" stroke="#000" stroke-opacity="0.25" stroke-width="0.66" >Value</text><text x="623.80" y="505.30" font-size="5.5" text-anchor="end" fill="#dedede" stroke="#dedede" stroke-width="0.06" >Value</text>
<rect x="566.30" y="515.30" width="58.70" height="11" rx="4" fill="url(#gdrop)" stroke="#000" stroke-width="1"/>
<path d="M569.30 527.20 H622.00" stroke="#9a9a9a" stroke-width="0.7"/>
<text x="570.75" y="523.30" font-size="5.5" text-anchor="start" fill="#000" fill-opacity="0.6" stroke="#000" stroke-opacity="0.25" stroke-width="0.66" >Snap</text><text x="570.30" y="522.70" font-size="5.5" text-anchor="start" fill="#dddddd" stroke="#dddddd" stroke-width="0.06" >Snap</text>
<path d="M618.30 520.30 L620.00 522.00 L621.70 520.30" stroke="#e8e8e8" stroke-width="0.95" fill="none"/>
<rect x="566.30" y="529.50" width="9" height="9" rx="2" fill="url(#gcheck)" stroke="#000" stroke-width="1.2"/>
<path d="M567.50 539.50 H574.10" stroke="#a0a0a0" stroke-width="0.7"/>
<text x="577.25" y="536.50" font-size="5.5" text-anchor="start" fill="#000" fill-opacity="0.6" stroke="#000" stroke-opacity="0.25" stroke-width="0.66" >Clamp</text><text x="576.80" y="535.90" font-size="5.5" text-anchor="start" fill="#e6e6e6" stroke="#e6e6e6" stroke-width="0.06" >Clamp</text>
<text x="567.75" y="551.10" font-size="5.5" text-anchor="start" fill="#000" fill-opacity="0.6" stroke="#000" stroke-opacity="0.25" stroke-width="0.66" >Value</text><text x="567.30" y="550.50" font-size="5.5" text-anchor="start" fill="#e0e0e0" stroke="#e0e0e0" stroke-width="0.06" >Value</text>
<rect x="566.30" y="555.90" width="58.70" height="10" rx="2.5" fill="url(#gfield)" stroke="#000" stroke-width="1.1"/>
<path d="M568.30 566.90 H623.00" stroke="#9a9a9a" stroke-width="0.6"/>
<text x="575.55" y="563.50" font-size="5.5" text-anchor="start" fill="#000" fill-opacity="0.6" stroke="#000" stroke-opacity="0.25" stroke-width="0.66" >Increment</text><text x="575.10" y="562.90" font-size="5.5" text-anchor="start" fill="#e6e6e6" stroke="#e6e6e6" stroke-width="0.06" >Increment</text>
<text x="617.25" y="563.50" font-size="5.5" text-anchor="end" fill="#000" fill-opacity="0.6" stroke="#000" stroke-opacity="0.25" stroke-width="0.66" >0.100</text><text x="616.80" y="562.90" font-size="5.5" text-anchor="end" fill="#e6e6e6" stroke="#e6e6e6" stroke-width="0.06" >0.100</text>
<circle cx="631.00" cy="503.40" r="2.35" fill="#b0b0b0" stroke="#0d0d0d" stroke-width="0.8"/>
<circle cx="560.30" cy="548.60" r="2.35" fill="#b0b0b0" stroke="#0d0d0d" stroke-width="0.8"/>
<circle cx="560.30" cy="560.90" r="2.35" fill="#b0b0b0" stroke="#0d0d0d" stroke-width="0.8"/>
<rect x="661.90" y="484.40" width="72.10" height="69.00" rx="4" fill="#000" opacity="0.55" filter="url(#shadow)"/>
<path d="M662.90 485.60 Q662.90 484.40 664.10 484.40 H731.80 Q733.00 484.40 733.00 485.60 V550.20 Q733.00 551.40 731.80 551.40 H664.10 Q662.90 551.40 662.90 550.20 Z" fill="#3d3d3d"/>
<path d="M662.90 495.40 V485.60 Q662.90 484.40 664.10 484.40 H731.80 Q733.00 484.40 733.00 485.60 V495.40 Z" fill="#4a88b5"/>
<path d="M668.60 489.00 H671.80 L670.20 491.70 Z" fill="#e8e8e8"/>
<text x="676.25" y="492.40" font-size="5.5" text-anchor="start" fill="#000" fill-opacity="0.6" stroke="#000" stroke-opacity="0.25" stroke-width="0.66" >Combine XYZ</text><text x="675.80" y="491.80" font-size="5.5" text-anchor="start" fill="#ececec" stroke="#ececec" stroke-width="0.06" >Combine XYZ</text>
<text x="726.25" y="505.90" font-size="5.5" text-anchor="end" fill="#000" fill-opacity="0.6" stroke="#000" stroke-opacity="0.25" stroke-width="0.66" >Vector</text><text x="725.80" y="505.30" font-size="5.5" text-anchor="end" fill="#dedede" stroke="#dedede" stroke-width="0.06" >Vector</text>
<text x="670.35" y="520.30" font-size="5.5" text-anchor="start" fill="#000" fill-opacity="0.6" stroke="#000" stroke-opacity="0.25" stroke-width="0.66" >X</text><text x="669.90" y="519.70" font-size="5.5" text-anchor="start" fill="#e0e0e0" stroke="#e0e0e0" stroke-width="0.06" >X</text>
<rect x="668.90" y="524.70" width="58.10" height="10" rx="2.5" fill="url(#gfield)" stroke="#000" stroke-width="1.1"/>
<path d="M670.90 535.70 H725.00" stroke="#9a9a9a" stroke-width="0.6"/>
<text x="678.15" y="532.30" font-size="5.5" text-anchor="start" fill="#000" fill-opacity="0.6" stroke="#000" stroke-opacity="0.25" stroke-width="0.66" >Y</text><text x="677.70" y="531.70" font-size="5.5" text-anchor="start" fill="#e6e6e6" stroke="#e6e6e6" stroke-width="0.06" >Y</text>
<text x="719.25" y="532.30" font-size="5.5" text-anchor="end" fill="#000" fill-opacity="0.6" stroke="#000" stroke-opacity="0.25" stroke-width="0.66" >0.000</text><text x="718.80" y="531.70" font-size="5.5" text-anchor="end" fill="#e6e6e6" stroke="#e6e6e6" stroke-width="0.06" >0.000</text>
<rect x="668.90" y="537.70" width="58.10" height="10" rx="2.5" fill="url(#gfield)" stroke="#000" stroke-width="1.1"/>
<path d="M670.90 548.70 H725.00" stroke="#9a9a9a" stroke-width="0.6"/>
<text x="678.15" y="545.30" font-size="5.5" text-anchor="start" fill="#000" fill-opacity="0.6" stroke="#000" stroke-opacity="0.25" stroke-width="0.66" >Z</text><text x="677.70" y="544.70" font-size="5.5" text-anchor="start" fill="#e6e6e6" stroke="#e6e6e6" stroke-width="0.06" >Z</text>
<text x="719.25" y="545.30" font-size="5.5" text-anchor="end" fill="#000" fill-opacity="0.6" stroke="#000" stroke-opacity="0.25" stroke-width="0.66" >0.000</text><text x="718.80" y="544.70" font-size="5.5" text-anchor="end" fill="#e6e6e6" stroke="#e6e6e6" stroke-width="0.06" >0.000</text>
<circle cx="733.00" cy="503.40" r="2.35" fill="#6363c7" stroke="#0d0d0d" stroke-width="0.8"/>
<circle cx="662.90" cy="517.80" r="2.35" fill="#b0b0b0" stroke="#0d0d0d" stroke-width="0.8"/>
<circle cx="662.90" cy="529.70" r="2.35" fill="#b0b0b0" stroke="#0d0d0d" stroke-width="0.8"/>
<circle cx="662.90" cy="542.70" r="2.35" fill="#b0b0b0" stroke="#0d0d0d" stroke-width="0.8"/>
<rect x="778.00" y="416.00" width="73.00" height="76.00" rx="4" fill="#000" opacity="0.55" filter="url(#shadow)"/>
<path d="M779.00 417.20 Q779.00 416.00 780.20 416.00 H848.80 Q850.00 416.00 850.00 417.20 V488.80 Q850.00 490.00 848.80 490.00 H780.20 Q779.00 490.00 779.00 488.80 Z" fill="#3d3d3d"/>
<path d="M779.00 427.00 V417.20 Q779.00 416.00 780.20 416.00 H848.80 Q850.00 416.00 850.00 417.20 V427.00 Z" fill="#6a58b0"/>
<path d="M784.70 420.60 H787.90 L786.30 423.30 Z" fill="#e8e8e8"/>
<text x="792.35" y="424.00" font-size="5.5" text-anchor="start" fill="#000" fill-opacity="0.6" stroke="#000" stroke-opacity="0.25" stroke-width="0.66" >Add</text><text x="791.90" y="423.40" font-size="5.5" text-anchor="start" fill="#ececec" stroke="#ececec" stroke-width="0.06" >Add</text>
<text x="843.25" y="437.60" font-size="5.5" text-anchor="end" fill="#000" fill-opacity="0.6" stroke="#000" stroke-opacity="0.25" stroke-width="0.66" >Vector</text><text x="842.80" y="437.00" font-size="5.5" text-anchor="end" fill="#dedede" stroke="#dedede" stroke-width="0.06" >Vector</text>
<rect x="785.00" y="448.30" width="59.00" height="11" rx="4" fill="url(#gdrop)" stroke="#000" stroke-width="1"/>
<path d="M788.00 460.20 H841.00" stroke="#9a9a9a" stroke-width="0.7"/>
<text x="789.45" y="456.30" font-size="5.5" text-anchor="start" fill="#000" fill-opacity="0.6" stroke="#000" stroke-opacity="0.25" stroke-width="0.66" >Add</text><text x="789.00" y="455.70" font-size="5.5" text-anchor="start" fill="#dddddd" stroke="#dddddd" stroke-width="0.06" >Add</text>
<path d="M837.30 453.30 L839.00 455.00 L840.70 453.30" stroke="#e8e8e8" stroke-width="0.95" fill="none"/>
<text x="786.45" y="469.70" font-size="5.5" text-anchor="start" fill="#000" fill-opacity="0.6" stroke="#000" stroke-opacity="0.25" stroke-width="0.66" >Vector</text><text x="786.00" y="469.10" font-size="5.5" text-anchor="start" fill="#e0e0e0" stroke="#e0e0e0" stroke-width="0.06" >Vector</text>
<text x="786.45" y="482.80" font-size="5.5" text-anchor="start" fill="#000" fill-opacity="0.6" stroke="#000" stroke-opacity="0.25" stroke-width="0.66" >Vector</text><text x="786.00" y="482.20" font-size="5.5" text-anchor="start" fill="#e0e0e0" stroke="#e0e0e0" stroke-width="0.06" >Vector</text>
<circle cx="850.00" cy="435.10" r="2.35" fill="#6363c7" stroke="#0d0d0d" stroke-width="0.8"/>
<circle cx="779.00" cy="467.20" r="2.35" fill="#6363c7" stroke="#0d0d0d" stroke-width="0.8"/>
<circle cx="779.00" cy="480.30" r="2.35" fill="#6363c7" stroke="#0d0d0d" stroke-width="0.8"/>
<rect x="889.80" y="416.00" width="72.60" height="110.20" rx="4" fill="#000" opacity="0.55" filter="url(#shadow)"/>
<path d="M890.80 417.20 Q890.80 416.00 892.00 416.00 H960.20 Q961.40 416.00 961.40 417.20 V523.00 Q961.40 524.20 960.20 524.20 H892.00 Q890.80 524.20 890.80 523.00 Z" fill="#3d3d3d"/>
<path d="M890.80 427.00 V417.20 Q890.80 416.00 892.00 416.00 H960.20 Q961.40 416.00 961.40 417.20 V427.00 Z" fill="#6a58b0"/>
<path d="M896.50 420.60 H899.70 L898.10 423.30 Z" fill="#e8e8e8"/>
<text x="904.15" y="424.00" font-size="5.5" text-anchor="start" fill="#000" fill-opacity="0.6" stroke="#000" stroke-opacity="0.25" stroke-width="0.66" >Multiply</text><text x="903.70" y="423.40" font-size="5.5" text-anchor="start" fill="#ececec" stroke="#ececec" stroke-width="0.06" >Multiply</text>
<text x="954.65" y="437.60" font-size="5.5" text-anchor="end" fill="#000" fill-opacity="0.6" stroke="#000" stroke-opacity="0.25" stroke-width="0.66" >Vector</text><text x="954.20" y="437.00" font-size="5.5" text-anchor="end" fill="#dedede" stroke="#dedede" stroke-width="0.06" >Vector</text>
<rect x="896.80" y="448.30" width="58.60" height="11" rx="4" fill="url(#gdrop)" stroke="#000" stroke-width="1"/>
<path d="M899.80 460.20 H952.40" stroke="#9a9a9a" stroke-width="0.7"/>
<text x="901.25" y="456.30" font-size="5.5" text-anchor="start" fill="#000" fill-opacity="0.6" stroke="#000" stroke-opacity="0.25" stroke-width="0.66" >Multiply</text><text x="900.80" y="455.70" font-size="5.5" text-anchor="start" fill="#dddddd" stroke="#dddddd" stroke-width="0.06" >Multiply</text>
<path d="M948.70 453.30 L950.40 455.00 L952.10 453.30" stroke="#e8e8e8" stroke-width="0.95" fill="none"/>
<text x="898.25" y="469.70" font-size="5.5" text-anchor="start" fill="#000" fill-opacity="0.6" stroke="#000" stroke-opacity="0.25" stroke-width="0.66" >Vector</text><text x="897.80" y="469.10" font-size="5.5" text-anchor="start" fill="#e0e0e0" stroke="#e0e0e0" stroke-width="0.06" >Vector</text>
<text x="897.25" y="482.80" font-size="5.5" text-anchor="start" fill="#000" fill-opacity="0.6" stroke="#000" stroke-opacity="0.25" stroke-width="0.66" >Vector:</text><text x="896.80" y="482.20" font-size="5.5" text-anchor="start" fill="#e0e0e0" stroke="#e0e0e0" stroke-width="0.06" >Vector:</text>
<rect x="896.80" y="486.10" width="58.60" height="11" rx="2.5" fill="url(#gfield)" stroke="#000" stroke-width="1.1"/>
<path d="M898.80 498.10 H953.40" stroke="#9a9a9a" stroke-width="0.6"/>
<text x="926.55" y="494.20" font-size="5.5" text-anchor="middle" fill="#000" fill-opacity="0.6" stroke="#000" stroke-opacity="0.25" stroke-width="0.66" >3.000</text><text x="926.10" y="493.60" font-size="5.5" text-anchor="middle" fill="#e6e6e6" stroke="#e6e6e6" stroke-width="0.06" >3.000</text>
<rect x="896.80" y="497.10" width="58.60" height="11" rx="2.5" fill="url(#gfield)" stroke="#000" stroke-width="1.1"/>
<path d="M898.80 509.10 H953.40" stroke="#9a9a9a" stroke-width="0.6"/>
<text x="926.55" y="505.20" font-size="5.5" text-anchor="middle" fill="#000" fill-opacity="0.6" stroke="#000" stroke-opacity="0.25" stroke-width="0.66" >4.000</text><text x="926.10" y="504.60" font-size="5.5" text-anchor="middle" fill="#e6e6e6" stroke="#e6e6e6" stroke-width="0.06" >4.000</text>
<rect x="896.80" y="508.20" width="58.60" height="11" rx="2.5" fill="url(#gfield)" stroke="#000" stroke-width="1.1"/>
<path d="M898.80 520.20 H953.40" stroke="#9a9a9a" stroke-width="0.6"/>
<text x="926.55" y="516.30" font-size="5.5" text-anchor="middle" fill="#000" fill-opacity="0.6" stroke="#000" stroke-opacity="0.25" stroke-width="0.66" >0.000</text><text x="926.10" y="515.70" font-size="5.5" text-anchor="middle" fill="#e6e6e6" stroke="#e6e6e6" stroke-width="0.06" >0.000</text>
<circle cx="961.40" cy="435.10" r="2.35" fill="#6363c7" stroke="#0d0d0d" stroke-width="0.8"/>
<circle cx="890.80" cy="467.20" r="2.35" fill="#6363c7" stroke="#0d0d0d" stroke-width="0.8"/>
<circle cx="890.80" cy="497.60" r="2.35" fill="#6363c7" stroke="#0d0d0d" stroke-width="0.8"/>
<rect x="1003.60" y="416.00" width="72.60" height="152.60" rx="4" fill="#000" opacity="0.55" filter="url(#shadow)"/>
<path d="M1004.60 417.20 Q1004.60 416.00 1005.80 416.00 H1074.00 Q1075.20 416.00 1075.20 417.20 V565.40 Q1075.20 566.60 1074.00 566.60 H1005.80 Q1004.60 566.60 1004.60 565.40 Z" fill="#3d3d3d"/>
<path d="M1004.60 427.00 V417.20 Q1004.60 416.00 1005.80 416.00 H1074.00 Q1075.20 416.00 1075.20 417.20 V427.00 Z" fill="#a4643a"/>
<path d="M1010.30 420.60 H1013.50 L1011.90 423.30 Z" fill="#e8e8e8"/>
<text x="1017.95" y="424.00" font-size="5.5" text-anchor="start" fill="#000" fill-opacity="0.6" stroke="#000" stroke-opacity="0.25" stroke-width="0.66" >Voronoi Texture</text><text x="1017.50" y="423.40" font-size="5.5" text-anchor="start" fill="#ececec" stroke="#ececec" stroke-width="0.06" >Voronoi Texture</text>
<text x="1068.45" y="437.60" font-size="5.5" text-anchor="end" fill="#000" fill-opacity="0.6" stroke="#000" stroke-opacity="0.25" stroke-width="0.66" >Distance</text><text x="1068.00" y="437.00" font-size="5.5" text-anchor="end" fill="#dedede" stroke="#dedede" stroke-width="0.06" >Distance</text>
<text x="1068.45" y="450.10" font-size="5.5" text-anchor="end" fill="#000" fill-opacity="0.6" stroke="#000" stroke-opacity="0.25" stroke-width="0.66" >Color</text><text x="1068.00" y="449.50" font-size="5.5" text-anchor="end" fill="#dedede" stroke="#dedede" stroke-width="0.06" >Color</text>
<text x="1068.45" y="462.50" font-size="5.5" text-anchor="end" fill="#000" fill-opacity="0.6" stroke="#000" stroke-opacity="0.25" stroke-width="0.66" >Position</text><text x="1068.00" y="461.90" font-size="5.5" text-anchor="end" fill="#dedede" stroke="#dedede" stroke-width="0.06" >Position</text>
<rect x="1010.60" y="473.40" width="58.60" height="11" rx="4" fill="url(#gdrop)" stroke="#000" stroke-width="1"/>
<path d="M1013.60 485.30 H1066.20" stroke="#9a9a9a" stroke-width="0.7"/>
<text x="1015.05" y="481.40" font-size="5.5" text-anchor="start" fill="#000" fill-opacity="0.6" stroke="#000" stroke-opacity="0.25" stroke-width="0.66" >2D</text><text x="1014.60" y="480.80" font-size="5.5" text-anchor="start" fill="#dddddd" stroke="#dddddd" stroke-width="0.06" >2D</text>
<path d="M1062.50 478.40 L1064.20 480.10 L1065.90 478.40" stroke="#e8e8e8" stroke-width="0.95" fill="none"/>
<rect x="1010.60" y="486.70" width="58.60" height="11" rx="4" fill="url(#gdrop)" stroke="#000" stroke-width="1"/>
<path d="M1013.60 498.60 H1066.20" stroke="#9a9a9a" stroke-width="0.7"/>
<text x="1015.05" y="494.70" font-size="5.5" text-anchor="start" fill="#000" fill-opacity="0.6" stroke="#000" stroke-opacity="0.25" stroke-width="0.66" >Smooth F1</text><text x="1014.60" y="494.10" font-size="5.5" text-anchor="start" fill="#dddddd" stroke="#dddddd" stroke-width="0.06" >Smooth F1</text>
<path d="M1062.50 491.70 L1064.20 493.40 L1065.90 491.70" stroke="#e8e8e8" stroke-width="0.95" fill="none"/>
<rect x="1010.60" y="500.50" width="58.60" height="11" rx="4" fill="url(#gdrop)" stroke="#000" stroke-width="1"/>
<path d="M1013.60 512.40 H1066.20" stroke="#9a9a9a" stroke-width="0.7"/>
<text x="1015.05" y="508.50" font-size="5.5" text-anchor="start" fill="#000" fill-opacity="0.6" stroke="#000" stroke-opacity="0.25" stroke-width="0.66" >Euclidean</text><text x="1014.60" y="507.90" font-size="5.5" text-anchor="start" fill="#dddddd" stroke="#dddddd" stroke-width="0.06" >Euclidean</text>
<path d="M1062.50 505.50 L1064.20 507.20 L1065.90 505.50" stroke="#e8e8e8" stroke-width="0.95" fill="none"/>
<text x="1012.05" y="522.40" font-size="5.5" text-anchor="start" fill="#000" fill-opacity="0.6" stroke="#000" stroke-opacity="0.25" stroke-width="0.66" >Vector</text><text x="1011.60" y="521.80" font-size="5.5" text-anchor="start" fill="#e0e0e0" stroke="#e0e0e0" stroke-width="0.06" >Vector</text>
<rect x="1010.60" y="527.50" width="58.60" height="10" rx="2.5" fill="url(#gfield)" stroke="#000" stroke-width="1.1"/>
<path d="M1012.60 538.50 H1067.20" stroke="#9a9a9a" stroke-width="0.6"/>
<text x="1019.85" y="535.10" font-size="5.5" text-anchor="start" fill="#000" fill-opacity="0.6" stroke="#000" stroke-opacity="0.25" stroke-width="0.66" >Scale</text><text x="1019.40" y="534.50" font-size="5.5" text-anchor="start" fill="#e6e6e6" stroke="#e6e6e6" stroke-width="0.06" >Scale</text>
<text x="1061.45" y="535.10" font-size="5.5" text-anchor="end" fill="#000" fill-opacity="0.6" stroke="#000" stroke-opacity="0.25" stroke-width="0.66" >8.000</text><text x="1061.00" y="534.50" font-size="5.5" text-anchor="end" fill="#e6e6e6" stroke="#e6e6e6" stroke-width="0.06" >8.000</text>
<rect x="1010.60" y="540.00" width="58.60" height="10" rx="2.5" fill="url(#gfield)" stroke="#000" stroke-width="1.1"/>
<clipPath id="cp220"><rect x="1010.60" y="540.00" width="58.60" height="10" rx="2.5"/></clipPath>
<rect x="1010.60" y="540.00" width="58.60" height="10" fill="#4772b3" clip-path="url(#cp220)"/>
<rect x="1010.60" y="540.00" width="58.60" height="10" rx="2.5" fill="none" stroke="#000" stroke-width="1.1"/>
<path d="M1012.60 551.00 H1067.20" stroke="#9a9a9a" stroke-width="0.6"/>
<text x="1016.35" y="547.60" font-size="5.5" text-anchor="start" fill="#000" fill-opacity="0.6" stroke="#000" stroke-opacity="0.25" stroke-width="0.66" >Smoothness</text><text x="1015.90" y="547.00" font-size="5.5" text-anchor="start" fill="#e6e6e6" stroke="#e6e6e6" stroke-width="0.06" >Smoothness</text>
<text x="1064.95" y="547.60" font-size="5.5" text-anchor="end" fill="#000" fill-opacity="0.6" stroke="#000" stroke-opacity="0.25" stroke-width="0.66" >1.000</text><text x="1064.50" y="547.00" font-size="5.5" text-anchor="end" fill="#e6e6e6" stroke="#e6e6e6" stroke-width="0.06" >1.000</text>
<rect x="1010.60" y="552.60" width="58.60" height="10" rx="2.5" fill="url(#gfield)" stroke="#000" stroke-width="1.1"/>
<clipPath id="cp227"><rect x="1010.60" y="552.60" width="58.60" height="10" rx="2.5"/></clipPath>
<rect x="1010.60" y="552.60" width="29.30" height="10" fill="#4772b3" clip-path="url(#cp227)"/>
<rect x="1010.60" y="552.60" width="58.60" height="10" rx="2.5" fill="none" stroke="#000" stroke-width="1.1"/>
<path d="M1012.60 563.60 H1067.20" stroke="#9a9a9a" stroke-width="0.6"/>
<text x="1016.35" y="560.20" font-size="5.5" text-anchor="start" fill="#000" fill-opacity="0.6" stroke="#000" stroke-opacity="0.25" stroke-width="0.66" >Randomness</text><text x="1015.90" y="559.60" font-size="5.5" text-anchor="start" fill="#e6e6e6" stroke="#e6e6e6" stroke-width="0.06" >Randomness</text>
<text x="1064.95" y="560.20" font-size="5.5" text-anchor="end" fill="#000" fill-opacity="0.6" stroke="#000" stroke-opacity="0.25" stroke-width="0.66" >0.500</text><text x="1064.50" y="559.60" font-size="5.5" text-anchor="end" fill="#e6e6e6" stroke="#e6e6e6" stroke-width="0.06" >0.500</text>
<circle cx="1075.20" cy="435.10" r="2.35" fill="#b0b0b0" stroke="#0d0d0d" stroke-width="0.8"/>
<circle cx="1075.20" cy="447.60" r="2.35" fill="#c7c729" stroke="#0d0d0d" stroke-width="0.8"/>
<circle cx="1075.20" cy="460.00" r="2.35" fill="#6363c7" stroke="#0d0d0d" stroke-width="0.8"/>
<circle cx="1004.60" cy="519.90" r="2.35" fill="#6363c7" stroke="#0d0d0d" stroke-width="0.8"/>
<circle cx="1004.60" cy="532.50" r="2.35" fill="#b0b0b0" stroke="#0d0d0d" stroke-width="0.8"/>
<circle cx="1004.60" cy="545.00" r="2.35" fill="#b0b0b0" stroke="#0d0d0d" stroke-width="0.8"/>
<circle cx="1004.60" cy="557.60" r="2.35" fill="#b0b0b0" stroke="#0d0d0d" stroke-width="0.8"/>
<rect x="165.40" y="661.00" width="72.80" height="123.50" rx="4" fill="#000" opacity="0.55" filter="url(#shadow)"/>
<path d="M166.40 662.20 Q166.40 661.00 167.60 661.00 H236.00 Q237.20 661.00 237.20 662.20 V781.30 Q237.20 782.50 236.00 782.50 H167.60 Q166.40 782.50 166.40 781.30 Z" fill="#3d3d3d"/>
<path d="M166.40 672.00 V662.20 Q166.40 661.00 167.60 661.00 H236.00 Q237.20 661.00 237.20 662.20 V672.00 Z" fill="#a4643a"/>
<path d="M172.10 665.60 H175.30 L173.70 668.30 Z" fill="#e8e8e8"/>
<text x="179.75" y="669.00" font-size="5.5" text-anchor="start" fill="#000" fill-opacity="0.6" stroke="#000" stroke-opacity="0.25" stroke-width="0.66" >Noise Texture</text><text x="179.30" y="668.40" font-size="5.5" text-anchor="start" fill="#ececec" stroke="#ececec" stroke-width="0.06" >Noise Texture</text>
<text x="230.45" y="682.90" font-size="5.5" text-anchor="end" fill="#000" fill-opacity="0.6" stroke="#000" stroke-opacity="0.25" stroke-width="0.66" >Fac</text><text x="230.00" y="682.30" font-size="5.5" text-anchor="end" fill="#dedede" stroke="#dedede" stroke-width="0.06" >Fac</text>
<text x="230.45" y="695.50" font-size="5.5" text-anchor="end" fill="#000" fill-opacity="0.6" stroke="#000" stroke-opacity="0.25" stroke-width="0.66" >Color</text><text x="230.00" y="694.90" font-size="5.5" text-anchor="end" fill="#dedede" stroke="#dedede" stroke-width="0.06" >Color</text>
<rect x="172.40" y="704.90" width="58.80" height="11" rx="4" fill="url(#gdrop)" stroke="#000" stroke-width="1"/>
<path d="M175.40 716.80 H228.20" stroke="#9a9a9a" stroke-width="0.7"/>
<text x="176.85" y="712.90" font-size="5.5" text-anchor="start" fill="#000" fill-opacity="0.6" stroke="#000" stroke-opacity="0.25" stroke-width="0.66" >2D</text><text x="176.40" y="712.30" font-size="5.5" text-anchor="start" fill="#dddddd" stroke="#dddddd" stroke-width="0.06" >2D</text>
<path d="M224.50 709.90 L226.20 711.60 L227.90 709.90" stroke="#e8e8e8" stroke-width="0.95" fill="none"/>
<text x="173.85" y="726.70" font-size="5.5" text-anchor="start" fill="#000" fill-opacity="0.6" stroke="#000" stroke-opacity="0.25" stroke-width="0.66" >Vector</text><text x="173.40" y="726.10" font-size="5.5" text-anchor="start" fill="#e0e0e0" stroke="#e0e0e0" stroke-width="0.06" >Vector</text>
<rect x="172.40" y="731.80" width="58.80" height="10" rx="2.5" fill="url(#gfield)" stroke="#000" stroke-width="1.1"/>
<path d="M174.40 742.80 H229.20" stroke="#9a9a9a" stroke-width="0.6"/>
<text x="181.65" y="739.40" font-size="5.5" text-anchor="start" fill="#000" fill-opacity="0.6" stroke="#000" stroke-opacity="0.25" stroke-width="0.66" >Scale</text><text x="181.20" y="738.80" font-size="5.5" text-anchor="start" fill="#e6e6e6" stroke="#e6e6e6" stroke-width="0.06" >Scale</text>
<text x="223.45" y="739.40" font-size="5.5" text-anchor="end" fill="#000" fill-opacity="0.6" stroke="#000" stroke-opacity="0.25" stroke-width="0.66" >9.000</text><text x="223.00" y="738.80" font-size="5.5" text-anchor="end" fill="#e6e6e6" stroke="#e6e6e6" stroke-width="0.06" >9.000</text>
<rect x="172.40" y="744.30" width="58.80" height="10" rx="2.5" fill="url(#gfield)" stroke="#000" stroke-width="1.1"/>
<path d="M174.40 755.30 H229.20" stroke="#9a9a9a" stroke-width="0.6"/>
<text x="181.65" y="751.90" font-size="5.5" text-anchor="start" fill="#000" fill-opacity="0.6" stroke="#000" stroke-opacity="0.25" stroke-width="0.66" >Detail</text><text x="181.20" y="751.30" font-size="5.5" text-anchor="start" fill="#e6e6e6" stroke="#e6e6e6" stroke-width="0.06" >Detail</text>
<text x="223.45" y="751.90" font-size="5.5" text-anchor="end" fill="#000" fill-opacity="0.6" stroke="#000" stroke-opacity="0.25" stroke-width="0.66" >0.000</text><text x="223.00" y="751.30" font-size="5.5" text-anchor="end" fill="#e6e6e6" stroke="#e6e6e6" stroke-width="0.06" >0.000</text>
<rect x="172.40" y="756.70" width="58.80" height="10" rx="2.5" fill="url(#gfield)" stroke="#000" stroke-width="1.1"/>
<path d="M174.40 767.70 H229.20" stroke="#9a9a9a" stroke-width="0.6"/>
<text x="178.15" y="764.30" font-size="5.5" text-anchor="start" fill="#000" fill-opacity="0.6" stroke="#000" stroke-opacity="0.25" stroke-width="0.66" >Roughness</text><text x="177.70" y="763.70" font-size="5.5" text-anchor="start" fill="#e6e6e6" stroke="#e6e6e6" stroke-width="0.06" >Roughness</text>
<text x="226.95" y="764.30" font-size="5.5" text-anchor="end" fill="#000" fill-opacity="0.6" stroke="#000" stroke-opacity="0.25" stroke-width="0.66" >0.000</text><text x="226.50" y="763.70" font-size="5.5" text-anchor="end" fill="#e6e6e6" stroke="#e6e6e6" stroke-width="0.06" >0.000</text>
<rect x="172.40" y="769.20" width="58.80" height="10" rx="2.5" fill="url(#gfield)" stroke="#000" stroke-width="1.1"/>
<path d="M174.40 780.20 H229.20" stroke="#9a9a9a" stroke-width="0.6"/>
<text x="181.65" y="776.80" font-size="5.5" text-anchor="start" fill="#000" fill-opacity="0.6" stroke="#000" stroke-opacity="0.25" stroke-width="0.66" >Distortion</text><text x="181.20" y="776.20" font-size="5.5" text-anchor="start" fill="#e6e6e6" stroke="#e6e6e6" stroke-width="0.06" >Distortion</text>
<text x="223.45" y="776.80" font-size="5.5" text-anchor="end" fill="#000" fill-opacity="0.6" stroke="#000" stroke-opacity="0.25" stroke-width="0.66" >0.000</text><text x="223.00" y="776.20" font-size="5.5" text-anchor="end" fill="#e6e6e6" stroke="#e6e6e6" stroke-width="0.06" >0.000</text>
<circle cx="237.20" cy="680.40" r="2.35" fill="#b0b0b0" stroke="#0d0d0d" stroke-width="0.8"/>
<circle cx="237.20" cy="693.00" r="2.35" fill="#c7c729" stroke="#0d0d0d" stroke-width="0.8"/>
<circle cx="166.40" cy="724.20" r="2.35" fill="#6363c7" stroke="#0d0d0d" stroke-width="0.8"/>
<circle cx="166.40" cy="736.80" r="2.35" fill="#b0b0b0" stroke="#0d0d0d" stroke-width="0.8"/>
<circle cx="166.40" cy="749.30" r="2.35" fill="#b0b0b0" stroke="#0d0d0d" stroke-width="0.8"/>
<circle cx="166.40" cy="761.70" r="2.35" fill="#b0b0b0" stroke="#0d0d0d" stroke-width="0.8"/>
<circle cx="166.40" cy="774.20" r="2.35" fill="#b0b0b0" stroke="#0d0d0d" stroke-width="0.8"/>
<rect x="348.00" y="661.00" width="73.00" height="98.60" rx="4" fill="#000" opacity="0.55" filter="url(#shadow)"/>
<path d="M349.00 662.20 Q349.00 661.00 350.20 661.00 H418.80 Q420.00 661.00 420.00 662.20 V756.40 Q420.00 757.60 418.80 757.60 H350.20 Q349.00 757.60 349.00 756.40 Z" fill="#3d3d3d"/>
<path d="M349.00 672.00 V662.20 Q349.00 661.00 350.20 661.00 H418.80 Q420.00 661.00 420.00 662.20 V672.00 Z" fill="#948537"/>
<path d="M354.70 665.60 H357.90 L356.30 668.30 Z" fill="#e8e8e8"/>
<text x="362.35" y="669.00" font-size="5.5" text-anchor="start" fill="#000" fill-opacity="0.6" stroke="#000" stroke-opacity="0.25" stroke-width="0.66" >Linear Light</text><text x="361.90" y="668.40" font-size="5.5" text-anchor="start" fill="#ececec" stroke="#ececec" stroke-width="0.06" >Linear Light</text>
<text x="413.25" y="682.90" font-size="5.5" text-anchor="end" fill="#000" fill-opacity="0.6" stroke="#000" stroke-opacity="0.25" stroke-width="0.66" >Color</text><text x="412.80" y="682.30" font-size="5.5" text-anchor="end" fill="#dedede" stroke="#dedede" stroke-width="0.06" >Color</text>
<rect x="355.00" y="692.20" width="59.00" height="11" rx="4" fill="url(#gdrop)" stroke="#000" stroke-width="1"/>
<path d="M358.00 704.10 H411.00" stroke="#9a9a9a" stroke-width="0.7"/>
<text x="359.45" y="700.20" font-size="5.5" text-anchor="start" fill="#000" fill-opacity="0.6" stroke="#000" stroke-opacity="0.25" stroke-width="0.66" >Linear Light</text><text x="359.00" y="699.60" font-size="5.5" text-anchor="start" fill="#dddddd" stroke="#dddddd" stroke-width="0.06" >Linear Light</text>
<path d="M407.30 697.20 L409.00 698.90 L410.70 697.20" stroke="#e8e8e8" stroke-width="0.95" fill="none"/>
<rect x="355.00" y="704.70" width="9" height="9" rx="2" fill="url(#gcheck)" stroke="#000" stroke-width="1.2"/>
<path d="M356.20 714.70 H362.80" stroke="#a0a0a0" stroke-width="0.7"/>
<text x="365.95" y="711.70" font-size="5.5" text-anchor="start" fill="#000" fill-opacity="0.6" stroke="#000" stroke-opacity="0.25" stroke-width="0.66" >Clamp</text><text x="365.50" y="711.10" font-size="5.5" text-anchor="start" fill="#e6e6e6" stroke="#e6e6e6" stroke-width="0.06" >Clamp</text>
<rect x="355.00" y="718.80" width="59.00" height="10" rx="2.5" fill="url(#gfield)" stroke="#000" stroke-width="1.1"/>
<path d="M357.00 729.80 H412.00" stroke="#9a9a9a" stroke-width="0.6"/>
<text x="360.75" y="726.40" font-size="5.5" text-anchor="start" fill="#000" fill-opacity="0.6" stroke="#000" stroke-opacity="0.25" stroke-width="0.66" >Fac</text><text x="360.30" y="725.80" font-size="5.5" text-anchor="start" fill="#e6e6e6" stroke="#e6e6e6" stroke-width="0.06" >Fac</text>
<text x="409.75" y="726.40" font-size="5.5" text-anchor="end" fill="#000" fill-opacity="0.6" stroke="#000" stroke-opacity="0.25" stroke-width="0.66" >0.020</text><text x="409.30" y="725.80" font-size="5.5" text-anchor="end" fill="#e6e6e6" stroke="#e6e6e6" stroke-width="0.06" >0.020</text>
<text x="356.45" y="738.90" font-size="5.5" text-anchor="start" fill="#000" fill-opacity="0.6" stroke="#000" stroke-opacity="0.25" stroke-width="0.66" >Color1</text><text x="356.00" y="738.30" font-size="5.5" text-anchor="start" fill="#e0e0e0" stroke="#e0e0e0" stroke-width="0.06" >Color1</text>
<text x="356.45" y="751.40" font-size="5.5" text-anchor="start" fill="#000" fill-opacity="0.6" stroke="#000" stroke-opacity="0.25" stroke-width="0.66" >Color2</text><text x="356.00" y="750.80" font-size="5.5" text-anchor="start" fill="#e0e0e0" stroke="#e0e0e0" stroke-width="0.06" >Color2</text>
<circle cx="420.00" cy="680.40" r="2.35" fill="#c7c729" stroke="#0d0d0d" stroke-width="0.8"/>
<circle cx="349.00" cy="723.80" r="2.35" fill="#b0b0b0" stroke="#0d0d0d" stroke-width="0.8"/>
<circle cx="349.00" cy="736.40" r="2.35" fill="#c7c729" stroke="#0d0d0d" stroke-width="0.8"/>
<circle cx="349.00" cy="748.90" r="2.35" fill="#c7c729" stroke="#0d0d0d" stroke-width="0.8"/>
<rect x="797.00" y="655.20" width="72.80" height="88.80" rx="4" fill="#000" opacity="0.55" filter="url(#shadow)"/>
<path d="M798.00 656.40 Q798.00 655.20 799.20 655.20 H867.60 Q868.80 655.20 868.80 656.40 V740.80 Q868.80 742.00 867.60 742.00 H799.20 Q798.00 742.00 798.00 740.80 Z" fill="#3d3d3d"/>
<path d="M798.00 666.20 V656.40 Q798.00 655.20 799.20 655.20 H867.60 Q868.80 655.20 868.80 656.40 V666.20 Z" fill="#4a88b5"/>
<path d="M803.70 659.80 H806.90 L805.30 662.50 Z" fill="#e8e8e8"/>
<text x="811.35" y="663.20" font-size="5.5" text-anchor="start" fill="#000" fill-opacity="0.6" stroke="#000" stroke-opacity="0.25" stroke-width="0.66" >Ping-Pong</text><text x="810.90" y="662.60" font-size="5.5" text-anchor="start" fill="#ececec" stroke="#ececec" stroke-width="0.06" >Ping-Pong</text>
<text x="862.05" y="677.30" font-size="5.5" text-anchor="end" fill="#000" fill-opacity="0.6" stroke="#000" stroke-opacity="0.25" stroke-width="0.66" >Value</text><text x="861.60" y="676.70" font-size="5.5" text-anchor="end" fill="#dedede" stroke="#dedede" stroke-width="0.06" >Value</text>
<rect x="804.00" y="686.50" width="58.80" height="11" rx="4" fill="url(#gdrop)" stroke="#000" stroke-width="1"/>
<path d="M807.00 698.40 H859.80" stroke="#9a9a9a" stroke-width="0.7"/>
<text x="808.45" y="694.50" font-size="5.5" text-anchor="start" fill="#000" fill-opacity="0.6" stroke="#000" stroke-opacity="0.25" stroke-width="0.66" >Ping-Pong</text><text x="808.00" y="693.90" font-size="5.5" text-anchor="start" fill="#dddddd" stroke="#dddddd" stroke-width="0.06" >Ping-Pong</text>
<path d="M856.10 691.50 L857.80 693.20 L859.50 691.50" stroke="#e8e8e8" stroke-width="0.95" fill="none"/>
<rect x="804.00" y="701.20" width="9" height="9" rx="2" fill="url(#gcheck)" stroke="#000" stroke-width="1.2"/>
<path d="M805.20 711.20 H811.80" stroke="#a0a0a0" stroke-width="0.7"/>
<text x="814.95" y="708.20" font-size="5.5" text-anchor="start" fill="#000" fill-opacity="0.6" stroke="#000" stroke-opacity="0.25" stroke-width="0.66" >Clamp</text><text x="814.50" y="707.60" font-size="5.5" text-anchor="start" fill="#e6e6e6" stroke="#e6e6e6" stroke-width="0.06" >Clamp</text>
<text x="805.45" y="722.10" font-size="5.5" text-anchor="start" fill="#000" fill-opacity="0.6" stroke="#000" stroke-opacity="0.25" stroke-width="0.66" >Value</text><text x="805.00" y="721.50" font-size="5.5" text-anchor="start" fill="#e0e0e0" stroke="#e0e0e0" stroke-width="0.06" >Value</text>
<rect x="804.00" y="727.00" width="58.80" height="10" rx="2.5" fill="url(#gfield)" stroke="#000" stroke-width="1.1"/>
<path d="M806.00 738.00 H860.80" stroke="#9a9a9a" stroke-width="0.6"/>
<text x="813.25" y="734.60" font-size="5.5" text-anchor="start" fill="#000" fill-opacity="0.6" stroke="#000" stroke-opacity="0.25" stroke-width="0.66" >Scale</text><text x="812.80" y="734.00" font-size="5.5" text-anchor="start" fill="#e6e6e6" stroke="#e6e6e6" stroke-width="0.06" >Scale</text>
<text x="855.05" y="734.60" font-size="5.5" text-anchor="end" fill="#000" fill-opacity="0.6" stroke="#000" stroke-opacity="0.25" stroke-width="0.66" >0.050</text><text x="854.60" y="734.00" font-size="5.5" text-anchor="end" fill="#e6e6e6" stroke="#e6e6e6" stroke-width="0.06" >0.050</text>
<circle cx="868.80" cy="674.80" r="2.35" fill="#b0b0b0" stroke="#0d0d0d" stroke-width="0.8"/>
<circle cx="798.00" cy="719.60" r="2.35" fill="#b0b0b0" stroke="#0d0d0d" stroke-width="0.8"/>
<circle cx="798.00" cy="732.00" r="2.35" fill="#b0b0b0" stroke="#0d0d0d" stroke-width="0.8"/>
<rect x="900.00" y="678.00" width="72.70" height="88.90" rx="4" fill="#000" opacity="0.55" filter="url(#shadow)"/>
<path d="M901.00 679.20 Q901.00 678.00 902.20 678.00 H970.50 Q971.70 678.00 971.70 679.20 V763.70 Q971.70 764.90 970.50 764.90 H902.20 Q901.00 764.90 901.00 763.70 Z" fill="#3d3d3d"/>
<path d="M901.00 689.00 V679.20 Q901.00 678.00 902.20 678.00 H970.50 Q971.70 678.00 971.70 679.20 V689.00 Z" fill="#4a88b5"/>
<path d="M906.70 682.60 H909.90 L908.30 685.30 Z" fill="#e8e8e8"/>
<text x="914.35" y="686.00" font-size="5.5" text-anchor="start" fill="#000" fill-opacity="0.6" stroke="#000" stroke-opacity="0.25" stroke-width="0.66" >Multiply</text><text x="913.90" y="685.40" font-size="5.5" text-anchor="start" fill="#ececec" stroke="#ececec" stroke-width="0.06" >Multiply</text>
<text x="964.95" y="699.90" font-size="5.5" text-anchor="end" fill="#000" fill-opacity="0.6" stroke="#000" stroke-opacity="0.25" stroke-width="0.66" >Value</text><text x="964.50" y="699.30" font-size="5.5" text-anchor="end" fill="#dedede" stroke="#dedede" stroke-width="0.06" >Value</text>
<rect x="907.00" y="709.20" width="58.70" height="11" rx="4" fill="url(#gdrop)" stroke="#000" stroke-width="1"/>
<path d="M910.00 721.10 H962.70" stroke="#9a9a9a" stroke-width="0.7"/>
<text x="911.45" y="717.20" font-size="5.5" text-anchor="start" fill="#000" fill-opacity="0.6" stroke="#000" stroke-opacity="0.25" stroke-width="0.66" >Multiply</text><text x="911.00" y="716.60" font-size="5.5" text-anchor="start" fill="#dddddd" stroke="#dddddd" stroke-width="0.06" >Multiply</text>
<path d="M959.00 714.20 L960.70 715.90 L962.40 714.20" stroke="#e8e8e8" stroke-width="0.95" fill="none"/>
<rect x="907.00" y="723.60" width="9" height="9" rx="2" fill="url(#gcheck)" stroke="#000" stroke-width="1.2"/>
<path d="M908.20 733.60 H914.80" stroke="#a0a0a0" stroke-width="0.7"/>
<text x="917.95" y="730.60" font-size="5.5" text-anchor="start" fill="#000" fill-opacity="0.6" stroke="#000" stroke-opacity="0.25" stroke-width="0.66" >Clamp</text><text x="917.50" y="730.00" font-size="5.5" text-anchor="start" fill="#e6e6e6" stroke="#e6e6e6" stroke-width="0.06" >Clamp</text>
<text x="908.45" y="745.00" font-size="5.5" text-anchor="start" fill="#000" fill-opacity="0.6" stroke="#000" stroke-opacity="0.25" stroke-width="0.66" >Value</text><text x="908.00" y="744.40" font-size="5.5" text-anchor="start" fill="#e0e0e0" stroke="#e0e0e0" stroke-width="0.06" >Value</text>
<rect x="907.00" y="749.70" width="58.70" height="10" rx="2.5" fill="url(#gfield)" stroke="#000" stroke-width="1.1"/>
<path d="M909.00 760.70 H963.70" stroke="#9a9a9a" stroke-width="0.6"/>
<text x="916.25" y="757.30" font-size="5.5" text-anchor="start" fill="#000" fill-opacity="0.6" stroke="#000" stroke-opacity="0.25" stroke-width="0.66" >Value</text><text x="915.80" y="756.70" font-size="5.5" text-anchor="start" fill="#e6e6e6" stroke="#e6e6e6" stroke-width="0.06" >Value</text>
<text x="957.95" y="757.30" font-size="5.5" text-anchor="end" fill="#000" fill-opacity="0.6" stroke="#000" stroke-opacity="0.25" stroke-width="0.66" >6.000</text><text x="957.50" y="756.70" font-size="5.5" text-anchor="end" fill="#e6e6e6" stroke="#e6e6e6" stroke-width="0.06" >6.000</text>
<circle cx="971.70" cy="697.40" r="2.35" fill="#b0b0b0" stroke="#0d0d0d" stroke-width="0.8"/>
<circle cx="901.00" cy="742.50" r="2.35" fill="#b0b0b0" stroke="#0d0d0d" stroke-width="0.8"/>
<circle cx="901.00" cy="754.70" r="2.35" fill="#b0b0b0" stroke="#0d0d0d" stroke-width="0.8"/>
<rect x="1173.40" y="644.10" width="72.60" height="88.70" rx="4" fill="#000" opacity="0.55" filter="url(#shadow)"/>
<path d="M1174.40 645.30 Q1174.40 644.10 1175.60 644.10 H1243.80 Q1245.00 644.10 1245.00 645.30 V729.60 Q1245.00 730.80 1243.80 730.80 H1175.60 Q1174.40 730.80 1174.40 729.60 Z" fill="#3d3d3d"/>
<path d="M1174.40 655.10 V645.30 Q1174.40 644.10 1175.60 644.10 H1243.80 Q1245.00 644.10 1245.00 645.30 V655.10 Z" fill="#4a88b5"/>
<path d="M1180.10 648.70 H1183.30 L1181.70 651.40 Z" fill="#e8e8e8"/>
<text x="1187.75" y="652.10" font-size="5.5" text-anchor="start" fill="#000" fill-opacity="0.6" stroke="#000" stroke-opacity="0.25" stroke-width="0.66" >Multiply</text><text x="1187.30" y="651.50" font-size="5.5" text-anchor="start" fill="#ececec" stroke="#ececec" stroke-width="0.06" >Multiply</text>
<text x="1238.25" y="665.70" font-size="5.5" text-anchor="end" fill="#000" fill-opacity="0.6" stroke="#000" stroke-opacity="0.25" stroke-width="0.66" >Value</text><text x="1237.80" y="665.10" font-size="5.5" text-anchor="end" fill="#dedede" stroke="#dedede" stroke-width="0.06" >Value</text>
<rect x="1180.40" y="674.80" width="58.60" height="11" rx="4" fill="url(#gdrop)" stroke="#000" stroke-width="1"/>
<path d="M1183.40 686.70 H1236.00" stroke="#9a9a9a" stroke-width="0.7"/>
<text x="1184.85" y="682.80" font-size="5.5" text-anchor="start" fill="#000" fill-opacity="0.6" stroke="#000" stroke-opacity="0.25" stroke-width="0.66" >Multiply</text><text x="1184.40" y="682.20" font-size="5.5" text-anchor="start" fill="#dddddd" stroke="#dddddd" stroke-width="0.06" >Multiply</text>
<path d="M1232.30 679.80 L1234.00 681.50 L1235.70 679.80" stroke="#e8e8e8" stroke-width="0.95" fill="none"/>
<rect x="1180.40" y="689.40" width="9" height="9" rx="2" fill="url(#gcheck)" stroke="#000" stroke-width="1.2"/>
<path d="M1181.60 699.40 H1188.20" stroke="#a0a0a0" stroke-width="0.7"/>
<text x="1191.35" y="696.40" font-size="5.5" text-anchor="start" fill="#000" fill-opacity="0.6" stroke="#000" stroke-opacity="0.25" stroke-width="0.66" >Clamp</text><text x="1190.90" y="695.80" font-size="5.5" text-anchor="start" fill="#e6e6e6" stroke="#e6e6e6" stroke-width="0.06" >Clamp</text>
<text x="1181.85" y="711.00" font-size="5.5" text-anchor="start" fill="#000" fill-opacity="0.6" stroke="#000" stroke-opacity="0.25" stroke-width="0.66" >Value</text><text x="1181.40" y="710.40" font-size="5.5" text-anchor="start" fill="#e0e0e0" stroke="#e0e0e0" stroke-width="0.06" >Value</text>
<rect x="1180.40" y="715.70" width="58.60" height="10" rx="2.5" fill="url(#gfield)" stroke="#000" stroke-width="1.1"/>
<path d="M1182.40 726.70 H1237.00" stroke="#9a9a9a" stroke-width="0.6"/>
<text x="1189.65" y="723.30" font-size="5.5" text-anchor="start" fill="#000" fill-opacity="0.6" stroke="#000" stroke-opacity="0.25" stroke-width="0.66" >Value</text><text x="1189.20" y="722.70" font-size="5.5" text-anchor="start" fill="#e6e6e6" stroke="#e6e6e6" stroke-width="0.06" >Value</text>
<text x="1231.25" y="723.30" font-size="5.5" text-anchor="end" fill="#000" fill-opacity="0.6" stroke="#000" stroke-opacity="0.25" stroke-width="0.66" >1.080</text><text x="1230.80" y="722.70" font-size="5.5" text-anchor="end" fill="#e6e6e6" stroke="#e6e6e6" stroke-width="0.06" >1.080</text>
<circle cx="1245.00" cy="663.20" r="2.35" fill="#b0b0b0" stroke="#0d0d0d" stroke-width="0.8"/>
<circle cx="1174.40" cy="708.50" r="2.35" fill="#b0b0b0" stroke="#0d0d0d" stroke-width="0.8"/>
<circle cx="1174.40" cy="720.70" r="2.35" fill="#b0b0b0" stroke="#0d0d0d" stroke-width="0.8"/>
<rect x="1117.70" y="416.00" width="123.20" height="119.50" rx="4" fill="#000" opacity="0.55" filter="url(#shadow)"/>
<path d="M1118.70 417.20 Q1118.70 416.00 1119.90 416.00 H1238.70 Q1239.90 416.00 1239.90 417.20 V532.30 Q1239.90 533.50 1238.70 533.50 H1119.90 Q1118.70 533.50 1118.70 532.30 Z" fill="#3d3d3d"/>
<path d="M1118.70 427.00 V417.20 Q1118.70 416.00 1119.90 416.00 H1238.70 Q1239.90 416.00 1239.90 417.20 V427.00 Z" fill="#4a88b5"/>
<path d="M1124.40 420.60 H1127.60 L1126.00 423.30 Z" fill="#e8e8e8"/>
<text x="1132.05" y="424.00" font-size="5.5" text-anchor="start" fill="#000" fill-opacity="0.6" stroke="#000" stroke-opacity="0.25" stroke-width="0.66" >ColorRamp</text><text x="1131.60" y="423.40" font-size="5.5" text-anchor="start" fill="#ececec" stroke="#ececec" stroke-width="0.06" >ColorRamp</text>
<text x="1233.15" y="437.80" font-size="5.5" text-anchor="end" fill="#000" fill-opacity="0.6" stroke="#000" stroke-opacity="0.25" stroke-width="0.66" >Color</text><text x="1232.70" y="437.20" font-size="5.5" text-anchor="end" fill="#dedede" stroke="#dedede" stroke-width="0.06" >Color</text>
<text x="1233.15" y="450.10" font-size="5.5" text-anchor="end" fill="#000" fill-opacity="0.6" stroke="#000" stroke-opacity="0.25" stroke-width="0.66" >Alpha</text><text x="1232.70" y="449.50" font-size="5.5" text-anchor="end" fill="#dedede" stroke="#dedede" stroke-width="0.06" >Alpha</text>
<text x="1126.15" y="526.70" font-size="5.5" text-anchor="start" fill="#000" fill-opacity="0.6" stroke="#000" stroke-opacity="0.25" stroke-width="0.66" >Fac</text><text x="1125.70" y="526.10" font-size="5.5" text-anchor="start" fill="#e0e0e0" stroke="#e0e0e0" stroke-width="0.06" >Fac</text>
<circle cx="1239.90" cy="435.30" r="2.35" fill="#c7c729" stroke="#0d0d0d" stroke-width="0.8"/>
<circle cx="1239.90" cy="447.60" r="2.35" fill="#b0b0b0" stroke="#0d0d0d" stroke-width="0.8"/>
<circle cx="1118.70" cy="524.20" r="2.35" fill="#b0b0b0" stroke="#0d0d0d" stroke-width="0.8"/>
<path d="M1127.40 467.40 h4 M1129.40 465.40 v4" stroke="#d8d8d8" stroke-width="0.8"/>
<path d="M1140.20 467.40 h4" stroke="#d0d0d0" stroke-width="0.8"/>
<path d="M1155.50 466.60 l1.5 1.5 l1.5 -1.5" stroke="#d0d0d0" stroke-width="0.6" fill="none"/>
<rect x="1171.90" y="461.70" width="62.00" height="11" rx="4" fill="url(#gdrop)" stroke="#0c0c0c" stroke-width="0.8"/>
<path d="M1202.90 461.70 V472.70" stroke="#3a3a3a" stroke-width="0.6"/>
<text x="1176.85" y="469.70" font-size="5.5" text-anchor="start" fill="#000" fill-opacity="0.6" stroke="#000" stroke-opacity="0.25" stroke-width="0.66" >RGB</text><text x="1176.40" y="469.10" font-size="5.5" text-anchor="start" fill="#dddddd" stroke="#dddddd" stroke-width="0.06" >RGB</text>
<text x="1207.35" y="469.70" font-size="5.5" text-anchor="start" textLength="21.4" lengthAdjust="spacingAndGlyphs" fill="#000" fill-opacity="0.6" stroke="#000" stroke-opacity="0.25" stroke-width="0.66" >B-Spline</text><text x="1206.90" y="469.10" font-size="5.5" text-anchor="start" textLength="21.4" lengthAdjust="spacingAndGlyphs" fill="#dddddd" stroke="#dddddd" stroke-width="0.06" >B-Spline</text>
<path d="M1197.40 467.00 L1198.90 468.40 L1200.40 467.00" stroke="#e0e0e0" stroke-width="0.6" fill="none"/>
<path d="M1227.90 467.00 L1229.40 468.40 L1230.90 467.00" stroke="#e0e0e0" stroke-width="0.6" fill="none"/>
<rect x="1129.00" y="474.60" width="99.00" height="11.60" fill="url(#gcr1)" stroke="#000" stroke-width="1"/>
<path d="M1127.20 488.40 V483.60 L1130.00 480.70 L1132.80 483.60 V488.40 Z" fill="#000"/>
<path d="M1128.10 487.60 V484.00 L1130.00 481.90 L1131.90 484.00 V487.60 Z" fill="#000" stroke="#d8d8d8" stroke-width="0.5"/>
<path d="M1163.20 488.40 V483.60 L1166.00 480.70 L1168.80 483.60 V488.40 Z" fill="#000"/>
<path d="M1164.10 487.60 V484.00 L1166.00 481.90 L1167.90 484.00 V487.60 Z" fill="#444" stroke="#d8d8d8" stroke-width="0.5"/>
<path d="M1181.20 488.40 V483.60 L1184.00 480.70 L1186.80 483.60 V488.40 Z" fill="#000"/>
<path d="M1182.10 487.60 V484.00 L1184.00 481.90 L1185.90 484.00 V487.60 Z" fill="#999" stroke="#d8d8d8" stroke-width="0.5"/>
<rect x="1124.70" y="491.40" width="31" height="10.4" rx="2.5" fill="url(#gfield)" stroke="#000" stroke-width="1.1"/>
<text x="1140.65" y="499.10" font-size="5.5" text-anchor="middle" fill="#000" fill-opacity="0.6" stroke="#000" stroke-opacity="0.25" stroke-width="0.66" >0</text><text x="1140.20" y="498.50" font-size="5.5" text-anchor="middle" fill="#e6e6e6" stroke="#e6e6e6" stroke-width="0.06" >0</text>
<rect x="1160.70" y="491.40" width="73.20" height="10.4" rx="2.5" fill="url(#gfield)" stroke="#000" stroke-width="1.1"/>
<text x="1172.15" y="499.10" font-size="5.5" text-anchor="start" fill="#000" fill-opacity="0.6" stroke="#000" stroke-opacity="0.25" stroke-width="0.66" >Pos</text><text x="1171.70" y="498.50" font-size="5.5" text-anchor="start" fill="#e6e6e6" stroke="#e6e6e6" stroke-width="0.06" >Pos</text>
<text x="1225.35" y="499.10" font-size="5.5" text-anchor="end" fill="#000" fill-opacity="0.6" stroke="#000" stroke-opacity="0.25" stroke-width="0.66" >0.000</text><text x="1224.90" y="498.50" font-size="5.5" text-anchor="end" fill="#e6e6e6" stroke="#e6e6e6" stroke-width="0.06" >0.000</text>
<rect x="1124.70" y="505.00" width="109.20" height="11.80" rx="4" fill="#000000" stroke="#000" stroke-width="1"/>
<path d="M1127.70 517.80 H1230.90" stroke="#9a9a9a" stroke-width="0.6"/>
<rect x="1014.20" y="632.00" width="122.90" height="119.90" rx="4" fill="#000" opacity="0.55" filter="url(#shadow)"/>
<path d="M1015.20 633.20 Q1015.20 632.00 1016.40 632.00 H1134.90 Q1136.10 632.00 1136.10 633.20 V748.70 Q1136.10 749.90 1134.90 749.90 H1016.40 Q1015.20 749.90 1015.20 748.70 Z" fill="#3d3d3d"/>
<path d="M1015.20 643.00 V633.20 Q1015.20 632.00 1016.40 632.00 H1134.90 Q1136.10 632.00 1136.10 633.20 V643.00 Z" fill="#4a88b5"/>
<path d="M1020.90 636.60 H1024.10 L1022.50 639.30 Z" fill="#e8e8e8"/>
<text x="1028.55" y="640.00" font-size="5.5" text-anchor="start" fill="#000" fill-opacity="0.6" stroke="#000" stroke-opacity="0.25" stroke-width="0.66" >ColorRamp</text><text x="1028.10" y="639.40" font-size="5.5" text-anchor="start" fill="#ececec" stroke="#ececec" stroke-width="0.06" >ColorRamp</text>
<text x="1129.35" y="654.60" font-size="5.5" text-anchor="end" fill="#000" fill-opacity="0.6" stroke="#000" stroke-opacity="0.25" stroke-width="0.66" >Color</text><text x="1128.90" y="654.00" font-size="5.5" text-anchor="end" fill="#dedede" stroke="#dedede" stroke-width="0.06" >Color</text>
<text x="1129.35" y="667.20" font-size="5.5" text-anchor="end" fill="#000" fill-opacity="0.6" stroke="#000" stroke-opacity="0.25" stroke-width="0.66" >Alpha</text><text x="1128.90" y="666.60" font-size="5.5" text-anchor="end" fill="#dedede" stroke="#dedede" stroke-width="0.06" >Alpha</text>
<text x="1022.65" y="744.00" font-size="5.5" text-anchor="start" fill="#000" fill-opacity="0.6" stroke="#000" stroke-opacity="0.25" stroke-width="0.66" >Fac</text><text x="1022.20" y="743.40" font-size="5.5" text-anchor="start" fill="#e0e0e0" stroke="#e0e0e0" stroke-width="0.06" >Fac</text>
<circle cx="1136.10" cy="652.10" r="2.35" fill="#c7c729" stroke="#0d0d0d" stroke-width="0.8"/>
<circle cx="1136.10" cy="664.70" r="2.35" fill="#b0b0b0" stroke="#0d0d0d" stroke-width="0.8"/>
<circle cx="1015.20" cy="741.50" r="2.35" fill="#b0b0b0" stroke="#0d0d0d" stroke-width="0.8"/>
<path d="M1023.90 683.80 h4 M1025.90 681.80 v4" stroke="#d8d8d8" stroke-width="0.8"/>
<path d="M1036.70 683.80 h4" stroke="#d0d0d0" stroke-width="0.8"/>
<path d="M1052.00 683.00 l1.5 1.5 l1.5 -1.5" stroke="#d0d0d0" stroke-width="0.6" fill="none"/>
<rect x="1068.10" y="678.10" width="62.00" height="11" rx="4" fill="url(#gdrop)" stroke="#0c0c0c" stroke-width="0.8"/>
<path d="M1099.10 678.10 V689.10" stroke="#3a3a3a" stroke-width="0.6"/>
<text x="1073.05" y="686.10" font-size="5.5" text-anchor="start" fill="#000" fill-opacity="0.6" stroke="#000" stroke-opacity="0.25" stroke-width="0.66" >RGB</text><text x="1072.60" y="685.50" font-size="5.5" text-anchor="start" fill="#dddddd" stroke="#dddddd" stroke-width="0.06" >RGB</text>
<text x="1103.55" y="686.10" font-size="5.5" text-anchor="start" textLength="21.4" lengthAdjust="spacingAndGlyphs" fill="#000" fill-opacity="0.6" stroke="#000" stroke-opacity="0.25" stroke-width="0.66" >B-Spline</text><text x="1103.10" y="685.50" font-size="5.5" text-anchor="start" textLength="21.4" lengthAdjust="spacingAndGlyphs" fill="#dddddd" stroke="#dddddd" stroke-width="0.06" >B-Spline</text>
<path d="M1093.60 683.40 L1095.10 684.80 L1096.60 683.40" stroke="#e0e0e0" stroke-width="0.6" fill="none"/>
<path d="M1124.10 683.40 L1125.60 684.80 L1127.10 683.40" stroke="#e0e0e0" stroke-width="0.6" fill="none"/>
<rect x="1025.30" y="691.50" width="100.70" height="12.50" fill="url(#gcr2)" stroke="#000" stroke-width="1"/>
<path d="M1027.20 706.20 V701.40 L1030.00 698.50 L1032.80 701.40 V706.20 Z" fill="#000"/>
<path d="M1028.10 705.40 V701.80 L1030.00 699.70 L1031.90 701.80 V705.40 Z" fill="#fff" stroke="#d8d8d8" stroke-width="0.5"/>
<path d="M1034.20 706.20 V701.40 L1037.00 698.50 L1039.80 701.40 V706.20 Z" fill="#000"/>
<path d="M1035.10 705.40 V701.80 L1037.00 699.70 L1038.90 701.80 V705.40 Z" fill="#333" stroke="#d8d8d8" stroke-width="0.5"/>
<rect x="1021.20" y="707.50" width="31" height="10.4" rx="2.5" fill="url(#gfield)" stroke="#000" stroke-width="1.1"/>
<text x="1037.15" y="715.20" font-size="5.5" text-anchor="middle" fill="#000" fill-opacity="0.6" stroke="#000" stroke-opacity="0.25" stroke-width="0.66" >0</text><text x="1036.70" y="714.60" font-size="5.5" text-anchor="middle" fill="#e6e6e6" stroke="#e6e6e6" stroke-width="0.06" >0</text>
<rect x="1057.20" y="707.50" width="72.90" height="10.4" rx="2.5" fill="url(#gfield)" stroke="#000" stroke-width="1.1"/>
<text x="1068.65" y="715.20" font-size="5.5" text-anchor="start" fill="#000" fill-opacity="0.6" stroke="#000" stroke-opacity="0.25" stroke-width="0.66" >Pos</text><text x="1068.20" y="714.60" font-size="5.5" text-anchor="start" fill="#e6e6e6" stroke="#e6e6e6" stroke-width="0.06" >Pos</text>
<text x="1121.55" y="715.20" font-size="5.5" text-anchor="end" fill="#000" fill-opacity="0.6" stroke="#000" stroke-opacity="0.25" stroke-width="0.66" >0.036</text><text x="1121.10" y="714.60" font-size="5.5" text-anchor="end" fill="#e6e6e6" stroke="#e6e6e6" stroke-width="0.06" >0.036</text>
<rect x="1021.20" y="722.70" width="108.90" height="9.70" rx="4" fill="#ffffff" stroke="#000" stroke-width="1"/>
<path d="M1024.20 733.40 H1127.10" stroke="#9a9a9a" stroke-width="0.6"/>
<rect x="1408.00" y="364.00" width="124.10" height="119.80" rx="4" fill="#000" opacity="0.55" filter="url(#shadow)"/>
<path d="M1409.00 365.20 Q1409.00 364.00 1410.20 364.00 H1529.90 Q1531.10 364.00 1531.10 365.20 V480.60 Q1531.10 481.80 1529.90 481.80 H1410.20 Q1409.00 481.80 1409.00 480.60 Z" fill="#3d3d3d"/>
<path d="M1409.00 375.00 V365.20 Q1409.00 364.00 1410.20 364.00 H1529.90 Q1531.10 364.00 1531.10 365.20 V375.00 Z" fill="#4a88b5"/>
<path d="M1414.70 368.60 H1417.90 L1416.30 371.30 Z" fill="#e8e8e8"/>
<text x="1422.35" y="372.00" font-size="5.5" text-anchor="start" fill="#000" fill-opacity="0.6" stroke="#000" stroke-opacity="0.25" stroke-width="0.66" >ColorRamp</text><text x="1421.90" y="371.40" font-size="5.5" text-anchor="start" fill="#ececec" stroke="#ececec" stroke-width="0.06" >ColorRamp</text>
<text x="1524.35" y="386.50" font-size="5.5" text-anchor="end" fill="#000" fill-opacity="0.6" stroke="#000" stroke-opacity="0.25" stroke-width="0.66" >Color</text><text x="1523.90" y="385.90" font-size="5.5" text-anchor="end" fill="#dedede" stroke="#dedede" stroke-width="0.06" >Color</text>
<text x="1524.35" y="399.20" font-size="5.5" text-anchor="end" fill="#000" fill-opacity="0.6" stroke="#000" stroke-opacity="0.25" stroke-width="0.66" >Alpha</text><text x="1523.90" y="398.60" font-size="5.5" text-anchor="end" fill="#dedede" stroke="#dedede" stroke-width="0.06" >Alpha</text>
<text x="1416.45" y="475.60" font-size="5.5" text-anchor="start" fill="#000" fill-opacity="0.6" stroke="#000" stroke-opacity="0.25" stroke-width="0.66" >Fac</text><text x="1416.00" y="475.00" font-size="5.5" text-anchor="start" fill="#e0e0e0" stroke="#e0e0e0" stroke-width="0.06" >Fac</text>
<circle cx="1531.10" cy="384.00" r="2.35" fill="#c7c729" stroke="#0d0d0d" stroke-width="0.8"/>
<circle cx="1531.10" cy="396.70" r="2.35" fill="#b0b0b0" stroke="#0d0d0d" stroke-width="0.8"/>
<circle cx="1409.00" cy="473.10" r="2.35" fill="#b0b0b0" stroke="#0d0d0d" stroke-width="0.8"/>
<path d="M1417.70 415.90 h4 M1419.70 413.90 v4" stroke="#d8d8d8" stroke-width="0.8"/>
<path d="M1430.50 415.90 h4" stroke="#d0d0d0" stroke-width="0.8"/>
<path d="M1445.80 415.10 l1.5 1.5 l1.5 -1.5" stroke="#d0d0d0" stroke-width="0.6" fill="none"/>
<rect x="1463.10" y="410.20" width="62.00" height="11" rx="4" fill="url(#gdrop)" stroke="#0c0c0c" stroke-width="0.8"/>
<path d="M1494.10 410.20 V421.20" stroke="#3a3a3a" stroke-width="0.6"/>
<text x="1468.05" y="418.20" font-size="5.5" text-anchor="start" fill="#000" fill-opacity="0.6" stroke="#000" stroke-opacity="0.25" stroke-width="0.66" >RGB</text><text x="1467.60" y="417.60" font-size="5.5" text-anchor="start" fill="#dddddd" stroke="#dddddd" stroke-width="0.06" >RGB</text>
<text x="1498.55" y="418.20" font-size="5.5" text-anchor="start" textLength="15" lengthAdjust="spacingAndGlyphs" fill="#000" fill-opacity="0.6" stroke="#000" stroke-opacity="0.25" stroke-width="0.66" >Linear</text><text x="1498.10" y="417.60" font-size="5.5" text-anchor="start" textLength="15" lengthAdjust="spacingAndGlyphs" fill="#dddddd" stroke="#dddddd" stroke-width="0.06" >Linear</text>
<path d="M1488.60 415.50 L1490.10 416.90 L1491.60 415.50" stroke="#e0e0e0" stroke-width="0.6" fill="none"/>
<path d="M1519.10 415.50 L1520.60 416.90 L1522.10 415.50" stroke="#e0e0e0" stroke-width="0.6" fill="none"/>
<rect x="1420.00" y="423.50" width="99.40" height="12.10" fill="#a6744f" stroke="#000" stroke-width="1"/>
<path d="M1418.20 437.80 V433.00 L1421.00 430.10 L1423.80 433.00 V437.80 Z" fill="#000"/>
<path d="M1419.10 437.00 V433.40 L1421.00 431.30 L1422.90 433.40 V437.00 Z" fill="#a6744f" stroke="#d8d8d8" stroke-width="0.5"/>
<path d="M1516.20 437.80 V433.00 L1519.00 430.10 L1521.80 433.00 V437.80 Z" fill="#000"/>
<path d="M1517.10 437.00 V433.40 L1519.00 431.30 L1520.90 433.40 V437.00 Z" fill="#a6744f" stroke="#d8d8d8" stroke-width="0.5"/>
<rect x="1415.00" y="440.30" width="31" height="10.4" rx="2.5" fill="url(#gfield)" stroke="#000" stroke-width="1.1"/>
<text x="1430.95" y="448.00" font-size="5.5" text-anchor="middle" fill="#000" fill-opacity="0.6" stroke="#000" stroke-opacity="0.25" stroke-width="0.66" >1</text><text x="1430.50" y="447.40" font-size="5.5" text-anchor="middle" fill="#e6e6e6" stroke="#e6e6e6" stroke-width="0.06" >1</text>
<rect x="1451.00" y="440.30" width="74.10" height="10.4" rx="2.5" fill="url(#gfield)" stroke="#000" stroke-width="1.1"/>
<text x="1462.45" y="448.00" font-size="5.5" text-anchor="start" fill="#000" fill-opacity="0.6" stroke="#000" stroke-opacity="0.25" stroke-width="0.66" >Pos</text><text x="1462.00" y="447.40" font-size="5.5" text-anchor="start" fill="#e6e6e6" stroke="#e6e6e6" stroke-width="0.06" >Pos</text>
<text x="1516.55" y="448.00" font-size="5.5" text-anchor="end" fill="#000" fill-opacity="0.6" stroke="#000" stroke-opacity="0.25" stroke-width="0.66" >1.000</text><text x="1516.10" y="447.40" font-size="5.5" text-anchor="end" fill="#e6e6e6" stroke="#e6e6e6" stroke-width="0.06" >1.000</text>
<rect x="1415.00" y="454.60" width="110.10" height="10.10" rx="4" fill="#a6744f" stroke="#000" stroke-width="1"/>
<path d="M1418.00 465.70 H1522.10" stroke="#9a9a9a" stroke-width="0.6"/>
<rect x="1408.20" y="512.90" width="72.80" height="125.80" rx="4" fill="#000" opacity="0.55" filter="url(#shadow)"/>
<path d="M1409.20 514.10 Q1409.20 512.90 1410.40 512.90 H1478.80 Q1480.00 512.90 1480.00 514.10 V635.50 Q1480.00 636.70 1478.80 636.70 H1410.40 Q1409.20 636.70 1409.20 635.50 Z" fill="#3d3d3d"/>
<path d="M1409.20 523.90 V514.10 Q1409.20 512.90 1410.40 512.90 H1478.80 Q1480.00 512.90 1480.00 514.10 V523.90 Z" fill="#4a88b5"/>
<path d="M1414.90 517.50 H1418.10 L1416.50 520.20 Z" fill="#e8e8e8"/>
<text x="1422.55" y="520.90" font-size="5.5" text-anchor="start" fill="#000" fill-opacity="0.6" stroke="#000" stroke-opacity="0.25" stroke-width="0.66" >Map Range</text><text x="1422.10" y="520.30" font-size="5.5" text-anchor="start" fill="#ececec" stroke="#ececec" stroke-width="0.06" >Map Range</text>
<text x="1473.25" y="534.60" font-size="5.5" text-anchor="end" fill="#000" fill-opacity="0.6" stroke="#000" stroke-opacity="0.25" stroke-width="0.66" >Result</text><text x="1472.80" y="534.00" font-size="5.5" text-anchor="end" fill="#dedede" stroke="#dedede" stroke-width="0.06" >Result</text>
<rect x="1415.20" y="543.80" width="58.80" height="11" rx="4" fill="url(#gdrop)" stroke="#000" stroke-width="1"/>
<path d="M1418.20 555.70 H1471.00" stroke="#9a9a9a" stroke-width="0.7"/>
<text x="1419.65" y="551.80" font-size="5.5" text-anchor="start" fill="#000" fill-opacity="0.6" stroke="#000" stroke-opacity="0.25" stroke-width="0.66" >Linear</text><text x="1419.20" y="551.20" font-size="5.5" text-anchor="start" fill="#dddddd" stroke="#dddddd" stroke-width="0.06" >Linear</text>
<path d="M1467.30 548.80 L1469.00 550.50 L1470.70 548.80" stroke="#e8e8e8" stroke-width="0.95" fill="none"/>
<rect x="1415.20" y="558.40" width="9" height="9" rx="2" fill="#4772b3" stroke="#000" stroke-width="1.2"/>
<path d="M1416.40 568.40 H1423.00" stroke="#a0a0a0" stroke-width="0.7"/>
<path d="M1417.20 563.20 L1419.00 565.30 L1422.40 560.40" stroke="#fff" stroke-width="1.1" fill="none"/>
<text x="1426.15" y="565.40" font-size="5.5" text-anchor="start" fill="#000" fill-opacity="0.6" stroke="#000" stroke-opacity="0.25" stroke-width="0.66" >Clamp</text><text x="1425.70" y="564.80" font-size="5.5" text-anchor="start" fill="#e6e6e6" stroke="#e6e6e6" stroke-width="0.06" >Clamp</text>
<text x="1416.65" y="579.50" font-size="5.5" text-anchor="start" fill="#000" fill-opacity="0.6" stroke="#000" stroke-opacity="0.25" stroke-width="0.66" >Value</text><text x="1416.20" y="578.90" font-size="5.5" text-anchor="start" fill="#e0e0e0" stroke="#e0e0e0" stroke-width="0.06" >Value</text>
<rect x="1415.20" y="584.60" width="58.80" height="10" rx="2.5" fill="url(#gfield)" stroke="#000" stroke-width="1.1"/>
<path d="M1417.20 595.60 H1472.00" stroke="#9a9a9a" stroke-width="0.6"/>
<text x="1424.45" y="592.20" font-size="5.5" text-anchor="start" fill="#000" fill-opacity="0.6" stroke="#000" stroke-opacity="0.25" stroke-width="0.66" >From Min</text><text x="1424.00" y="591.60" font-size="5.5" text-anchor="start" fill="#e6e6e6" stroke="#e6e6e6" stroke-width="0.06" >From Min</text>
<text x="1466.25" y="592.20" font-size="5.5" text-anchor="end" fill="#000" fill-opacity="0.6" stroke="#000" stroke-opacity="0.25" stroke-width="0.66" >0.000</text><text x="1465.80" y="591.60" font-size="5.5" text-anchor="end" fill="#e6e6e6" stroke="#e6e6e6" stroke-width="0.06" >0.000</text>
<rect x="1415.20" y="596.90" width="58.80" height="10" rx="2.5" fill="url(#gfield)" stroke="#000" stroke-width="1.1"/>
<path d="M1417.20 607.90 H1472.00" stroke="#9a9a9a" stroke-width="0.6"/>
<text x="1424.45" y="604.50" font-size="5.5" text-anchor="start" fill="#000" fill-opacity="0.6" stroke="#000" stroke-opacity="0.25" stroke-width="0.66" >From Max</text><text x="1424.00" y="603.90" font-size="5.5" text-anchor="start" fill="#e6e6e6" stroke="#e6e6e6" stroke-width="0.06" >From Max</text>
<text x="1466.25" y="604.50" font-size="5.5" text-anchor="end" fill="#000" fill-opacity="0.6" stroke="#000" stroke-opacity="0.25" stroke-width="0.66" >1.000</text><text x="1465.80" y="603.90" font-size="5.5" text-anchor="end" fill="#e6e6e6" stroke="#e6e6e6" stroke-width="0.06" >1.000</text>
<rect x="1415.20" y="609.50" width="58.80" height="10" rx="2.5" fill="url(#gfield)" stroke="#000" stroke-width="1.1"/>
<path d="M1417.20 620.50 H1472.00" stroke="#9a9a9a" stroke-width="0.6"/>
<text x="1424.45" y="617.10" font-size="5.5" text-anchor="start" fill="#000" fill-opacity="0.6" stroke="#000" stroke-opacity="0.25" stroke-width="0.66" >To Min</text><text x="1424.00" y="616.50" font-size="5.5" text-anchor="start" fill="#e6e6e6" stroke="#e6e6e6" stroke-width="0.06" >To Min</text>
<text x="1466.25" y="617.10" font-size="5.5" text-anchor="end" fill="#000" fill-opacity="0.6" stroke="#000" stroke-opacity="0.25" stroke-width="0.66" >0.200</text><text x="1465.80" y="616.50" font-size="5.5" text-anchor="end" fill="#e6e6e6" stroke="#e6e6e6" stroke-width="0.06" >0.200</text>
<rect x="1415.20" y="621.90" width="58.80" height="10" rx="2.5" fill="url(#gfield)" stroke="#000" stroke-width="1.1"/>
<path d="M1417.20 632.90 H1472.00" stroke="#9a9a9a" stroke-width="0.6"/>
<text x="1424.45" y="629.50" font-size="5.5" text-anchor="start" fill="#000" fill-opacity="0.6" stroke="#000" stroke-opacity="0.25" stroke-width="0.66" >To Max</text><text x="1424.00" y="628.90" font-size="5.5" text-anchor="start" fill="#e6e6e6" stroke="#e6e6e6" stroke-width="0.06" >To Max</text>
<text x="1466.25" y="629.50" font-size="5.5" text-anchor="end" fill="#000" fill-opacity="0.6" stroke="#000" stroke-opacity="0.25" stroke-width="0.66" >0.000</text><text x="1465.80" y="628.90" font-size="5.5" text-anchor="end" fill="#e6e6e6" stroke="#e6e6e6" stroke-width="0.06" >0.000</text>
<circle cx="1480.00" cy="532.10" r="2.35" fill="#b0b0b0" stroke="#0d0d0d" stroke-width="0.8"/>
<circle cx="1409.20" cy="577.00" r="2.35" fill="#b0b0b0" stroke="#0d0d0d" stroke-width="0.8"/>
<circle cx="1409.20" cy="589.60" r="2.35" fill="#b0b0b0" stroke="#0d0d0d" stroke-width="0.8"/>
<circle cx="1409.20" cy="601.90" r="2.35" fill="#b0b0b0" stroke="#0d0d0d" stroke-width="0.8"/>
<circle cx="1409.20" cy="614.50" r="2.35" fill="#b0b0b0" stroke="#0d0d0d" stroke-width="0.8"/>
<circle cx="1409.20" cy="626.90" r="2.35" fill="#b0b0b0" stroke="#0d0d0d" stroke-width="0.8"/>
<rect x="1306.00" y="627.00" width="73.00" height="88.60" rx="4" fill="#000" opacity="0.55" filter="url(#shadow)"/>
<path d="M1307.00 628.20 Q1307.00 627.00 1308.20 627.00 H1376.80 Q1378.00 627.00 1378.00 628.20 V712.40 Q1378.00 713.60 1376.80 713.60 H1308.20 Q1307.00 713.60 1307.00 712.40 Z" fill="#3d3d3d"/>
<path d="M1307.00 638.00 V628.20 Q1307.00 627.00 1308.20 627.00 H1376.80 Q1378.00 627.00 1378.00 628.20 V638.00 Z" fill="#4a88b5"/>
<path d="M1312.70 631.60 H1315.90 L1314.30 634.30 Z" fill="#e8e8e8"/>
<text x="1320.35" y="635.00" font-size="5.5" text-anchor="start" fill="#000" fill-opacity="0.6" stroke="#000" stroke-opacity="0.25" stroke-width="0.66" >Add</text><text x="1319.90" y="634.40" font-size="5.5" text-anchor="start" fill="#ececec" stroke="#ececec" stroke-width="0.06" >Add</text>
<text x="1371.25" y="648.90" font-size="5.5" text-anchor="end" fill="#000" fill-opacity="0.6" stroke="#000" stroke-opacity="0.25" stroke-width="0.66" >Value</text><text x="1370.80" y="648.30" font-size="5.5" text-anchor="end" fill="#dedede" stroke="#dedede" stroke-width="0.06" >Value</text>
<rect x="1313.00" y="657.60" width="59.00" height="11" rx="4" fill="url(#gdrop)" stroke="#000" stroke-width="1"/>
<path d="M1316.00 669.50 H1369.00" stroke="#9a9a9a" stroke-width="0.7"/>
<text x="1317.45" y="665.60" font-size="5.5" text-anchor="start" fill="#000" fill-opacity="0.6" stroke="#000" stroke-opacity="0.25" stroke-width="0.66" >Add</text><text x="1317.00" y="665.00" font-size="5.5" text-anchor="start" fill="#dddddd" stroke="#dddddd" stroke-width="0.06" >Add</text>
<path d="M1365.30 662.60 L1367.00 664.30 L1368.70 662.60" stroke="#e8e8e8" stroke-width="0.95" fill="none"/>
<rect x="1313.00" y="672.30" width="9" height="9" rx="2" fill="url(#gcheck)" stroke="#000" stroke-width="1.2"/>
<path d="M1314.20 682.30 H1320.80" stroke="#a0a0a0" stroke-width="0.7"/>
<text x="1323.95" y="679.30" font-size="5.5" text-anchor="start" fill="#000" fill-opacity="0.6" stroke="#000" stroke-opacity="0.25" stroke-width="0.66" >Clamp</text><text x="1323.50" y="678.70" font-size="5.5" text-anchor="start" fill="#e6e6e6" stroke="#e6e6e6" stroke-width="0.06" >Clamp</text>
<text x="1314.45" y="693.70" font-size="5.5" text-anchor="start" fill="#000" fill-opacity="0.6" stroke="#000" stroke-opacity="0.25" stroke-width="0.66" >Value</text><text x="1314.00" y="693.10" font-size="5.5" text-anchor="start" fill="#e0e0e0" stroke="#e0e0e0" stroke-width="0.06" >Value</text>
<text x="1314.45" y="706.00" font-size="5.5" text-anchor="start" fill="#000" fill-opacity="0.6" stroke="#000" stroke-opacity="0.25" stroke-width="0.66" >Value</text><text x="1314.00" y="705.40" font-size="5.5" text-anchor="start" fill="#e0e0e0" stroke="#e0e0e0" stroke-width="0.06" >Value</text>
<circle cx="1378.00" cy="646.40" r="2.35" fill="#b0b0b0" stroke="#0d0d0d" stroke-width="0.8"/>
<circle cx="1307.00" cy="691.20" r="2.35" fill="#b0b0b0" stroke="#0d0d0d" stroke-width="0.8"/>
<circle cx="1307.00" cy="703.50" r="2.35" fill="#b0b0b0" stroke="#0d0d0d" stroke-width="0.8"/>
<rect x="1522.00" y="569.80" width="72.90" height="98.80" rx="4" fill="#000" opacity="0.55" filter="url(#shadow)"/>
<path d="M1523.00 571.00 Q1523.00 569.80 1524.20 569.80 H1592.70 Q1593.90 569.80 1593.90 571.00 V665.40 Q1593.90 666.60 1592.70 666.60 H1524.20 Q1523.00 666.60 1523.00 665.40 Z" fill="#3d3d3d"/>
<path d="M1523.00 580.80 V571.00 Q1523.00 569.80 1524.20 569.80 H1592.70 Q1593.90 569.80 1593.90 571.00 V580.80 Z" fill="#6a58b0"/>
<path d="M1528.70 574.40 H1531.90 L1530.30 577.10 Z" fill="#e8e8e8"/>
<text x="1536.35" y="577.80" font-size="5.5" text-anchor="start" fill="#000" fill-opacity="0.6" stroke="#000" stroke-opacity="0.25" stroke-width="0.66" >Bump</text><text x="1535.90" y="577.20" font-size="5.5" text-anchor="start" fill="#ececec" stroke="#ececec" stroke-width="0.06" >Bump</text>
<text x="1587.15" y="591.80" font-size="5.5" text-anchor="end" fill="#000" fill-opacity="0.6" stroke="#000" stroke-opacity="0.25" stroke-width="0.66" >Normal</text><text x="1586.70" y="591.20" font-size="5.5" text-anchor="end" fill="#dedede" stroke="#dedede" stroke-width="0.06" >Normal</text>
<rect x="1529.00" y="601.50" width="9" height="9" rx="2" fill="url(#gcheck)" stroke="#000" stroke-width="1.2"/>
<path d="M1530.20 611.50 H1536.80" stroke="#a0a0a0" stroke-width="0.7"/>
<text x="1539.95" y="608.50" font-size="5.5" text-anchor="start" fill="#000" fill-opacity="0.6" stroke="#000" stroke-opacity="0.25" stroke-width="0.66" >Invert</text><text x="1539.50" y="607.90" font-size="5.5" text-anchor="start" fill="#e6e6e6" stroke="#e6e6e6" stroke-width="0.06" >Invert</text>
<rect x="1529.00" y="615.60" width="58.90" height="10" rx="2.5" fill="url(#gfield)" stroke="#000" stroke-width="1.1"/>
<clipPath id="cp524"><rect x="1529.00" y="615.60" width="58.90" height="10" rx="2.5"/></clipPath>
<rect x="1529.00" y="615.60" width="14.73" height="10" fill="#4772b3" clip-path="url(#cp524)"/>
<rect x="1529.00" y="615.60" width="58.90" height="10" rx="2.5" fill="none" stroke="#000" stroke-width="1.1"/>
<path d="M1531.00 626.60 H1585.90" stroke="#9a9a9a" stroke-width="0.6"/>
<text x="1534.75" y="623.20" font-size="5.5" text-anchor="start" fill="#000" fill-opacity="0.6" stroke="#000" stroke-opacity="0.25" stroke-width="0.66" >Strength</text><text x="1534.30" y="622.60" font-size="5.5" text-anchor="start" fill="#e6e6e6" stroke="#e6e6e6" stroke-width="0.06" >Strength</text>
<text x="1583.65" y="623.20" font-size="5.5" text-anchor="end" fill="#000" fill-opacity="0.6" stroke="#000" stroke-opacity="0.25" stroke-width="0.66" >0.250</text><text x="1583.20" y="622.60" font-size="5.5" text-anchor="end" fill="#e6e6e6" stroke="#e6e6e6" stroke-width="0.06" >0.250</text>
<rect x="1529.00" y="628.00" width="58.90" height="10" rx="2.5" fill="url(#gfield)" stroke="#000" stroke-width="1.1"/>
<path d="M1531.00 639.00 H1585.90" stroke="#9a9a9a" stroke-width="0.6"/>
<text x="1538.25" y="635.60" font-size="5.5" text-anchor="start" fill="#000" fill-opacity="0.6" stroke="#000" stroke-opacity="0.25" stroke-width="0.66" >Distance</text><text x="1537.80" y="635.00" font-size="5.5" text-anchor="start" fill="#e6e6e6" stroke="#e6e6e6" stroke-width="0.06" >Distance</text>
<text x="1580.15" y="635.60" font-size="5.5" text-anchor="end" fill="#000" fill-opacity="0.6" stroke="#000" stroke-opacity="0.25" stroke-width="0.66" >0.200</text><text x="1579.70" y="635.00" font-size="5.5" text-anchor="end" fill="#e6e6e6" stroke="#e6e6e6" stroke-width="0.06" >0.200</text>
<text x="1530.45" y="648.10" font-size="5.5" text-anchor="start" fill="#000" fill-opacity="0.6" stroke="#000" stroke-opacity="0.25" stroke-width="0.66" >Height</text><text x="1530.00" y="647.50" font-size="5.5" text-anchor="start" fill="#e0e0e0" stroke="#e0e0e0" stroke-width="0.06" >Height</text>
<text x="1530.45" y="660.70" font-size="5.5" text-anchor="start" fill="#000" fill-opacity="0.6" stroke="#000" stroke-opacity="0.25" stroke-width="0.66" >Normal</text><text x="1530.00" y="660.10" font-size="5.5" text-anchor="start" fill="#e0e0e0" stroke="#e0e0e0" stroke-width="0.06" >Normal</text>
<circle cx="1593.90" cy="589.30" r="2.35" fill="#6363c7" stroke="#0d0d0d" stroke-width="0.8"/>
<circle cx="1523.00" cy="620.60" r="2.35" fill="#b0b0b0" stroke="#0d0d0d" stroke-width="0.8"/>
<circle cx="1523.00" cy="633.00" r="2.35" fill="#b0b0b0" stroke="#0d0d0d" stroke-width="0.8"/>
<circle cx="1523.00" cy="645.60" r="2.35" fill="#b0b0b0" stroke="#0d0d0d" stroke-width="0.8"/>
<circle cx="1523.00" cy="658.20" r="2.35" fill="#6363c7" stroke="#0d0d0d" stroke-width="0.8"/>
<rect x="1522.00" y="672.30" width="73.00" height="124.70" rx="4" fill="#000" opacity="0.55" filter="url(#shadow)"/>
<path d="M1523.00 673.50 Q1523.00 672.30 1524.20 672.30 H1592.80 Q1594.00 672.30 1594.00 673.50 V793.80 Q1594.00 795.00 1592.80 795.00 H1524.20 Q1523.00 795.00 1523.00 793.80 Z" fill="#3d3d3d"/>
<path d="M1523.00 683.30 V673.50 Q1523.00 672.30 1524.20 672.30 H1592.80 Q1594.00 672.30 1594.00 673.50 V683.30 Z" fill="#a4643a"/>
<path d="M1528.70 676.90 H1531.90 L1530.30 679.60 Z" fill="#e8e8e8"/>
<text x="1536.35" y="680.30" font-size="5.5" text-anchor="start" fill="#000" fill-opacity="0.6" stroke="#000" stroke-opacity="0.25" stroke-width="0.66" >Noise Texture</text><text x="1535.90" y="679.70" font-size="5.5" text-anchor="start" fill="#ececec" stroke="#ececec" stroke-width="0.06" >Noise Texture</text>
<text x="1587.25" y="694.10" font-size="5.5" text-anchor="end" fill="#000" fill-opacity="0.6" stroke="#000" stroke-opacity="0.25" stroke-width="0.66" >Fac</text><text x="1586.80" y="693.50" font-size="5.5" text-anchor="end" fill="#dedede" stroke="#dedede" stroke-width="0.06" >Fac</text>
<text x="1587.25" y="707.00" font-size="5.5" text-anchor="end" fill="#000" fill-opacity="0.6" stroke="#000" stroke-opacity="0.25" stroke-width="0.66" >Color</text><text x="1586.80" y="706.40" font-size="5.5" text-anchor="end" fill="#dedede" stroke="#dedede" stroke-width="0.06" >Color</text>
<rect x="1529.00" y="715.60" width="59.00" height="11" rx="4" fill="url(#gdrop)" stroke="#000" stroke-width="1"/>
<path d="M1532.00 727.50 H1585.00" stroke="#9a9a9a" stroke-width="0.7"/>
<text x="1533.45" y="723.60" font-size="5.5" text-anchor="start" fill="#000" fill-opacity="0.6" stroke="#000" stroke-opacity="0.25" stroke-width="0.66" >3D</text><text x="1533.00" y="723.00" font-size="5.5" text-anchor="start" fill="#dddddd" stroke="#dddddd" stroke-width="0.06" >3D</text>
<path d="M1581.30 720.60 L1583.00 722.30 L1584.70 720.60" stroke="#e8e8e8" stroke-width="0.95" fill="none"/>
<text x="1530.45" y="738.50" font-size="5.5" text-anchor="start" fill="#000" fill-opacity="0.6" stroke="#000" stroke-opacity="0.25" stroke-width="0.66" >Vector</text><text x="1530.00" y="737.90" font-size="5.5" text-anchor="start" fill="#e0e0e0" stroke="#e0e0e0" stroke-width="0.06" >Vector</text>
<rect x="1529.00" y="742.80" width="59.00" height="10" rx="2.5" fill="url(#gfield)" stroke="#000" stroke-width="1.1"/>
<path d="M1531.00 753.80 H1586.00" stroke="#9a9a9a" stroke-width="0.6"/>
<text x="1538.25" y="750.40" font-size="5.5" text-anchor="start" fill="#000" fill-opacity="0.6" stroke="#000" stroke-opacity="0.25" stroke-width="0.66" >Scale</text><text x="1537.80" y="749.80" font-size="5.5" text-anchor="start" fill="#e6e6e6" stroke="#e6e6e6" stroke-width="0.06" >Scale</text>
<text x="1580.25" y="750.40" font-size="5.5" text-anchor="end" fill="#000" fill-opacity="0.6" stroke="#000" stroke-opacity="0.25" stroke-width="0.66" >3.000</text><text x="1579.80" y="749.80" font-size="5.5" text-anchor="end" fill="#e6e6e6" stroke="#e6e6e6" stroke-width="0.06" >3.000</text>
<rect x="1529.00" y="755.80" width="59.00" height="10" rx="2.5" fill="url(#gfield)" stroke="#000" stroke-width="1.1"/>
<path d="M1531.00 766.80 H1586.00" stroke="#9a9a9a" stroke-width="0.6"/>
<text x="1538.25" y="763.40" font-size="5.5" text-anchor="start" fill="#000" fill-opacity="0.6" stroke="#000" stroke-opacity="0.25" stroke-width="0.66" >Detail</text><text x="1537.80" y="762.80" font-size="5.5" text-anchor="start" fill="#e6e6e6" stroke="#e6e6e6" stroke-width="0.06" >Detail</text>
<text x="1580.25" y="763.40" font-size="5.5" text-anchor="end" fill="#000" fill-opacity="0.6" stroke="#000" stroke-opacity="0.25" stroke-width="0.66" >4.000</text><text x="1579.80" y="762.80" font-size="5.5" text-anchor="end" fill="#e6e6e6" stroke="#e6e6e6" stroke-width="0.06" >4.000</text>
<rect x="1529.00" y="768.40" width="59.00" height="10" rx="2.5" fill="url(#gfield)" stroke="#000" stroke-width="1.1"/>
<clipPath id="cp562"><rect x="1529.00" y="768.40" width="59.00" height="10" rx="2.5"/></clipPath>
<rect x="1529.00" y="768.40" width="41.30" height="10" fill="#4772b3" clip-path="url(#cp562)"/>
<rect x="1529.00" y="768.40" width="59.00" height="10" rx="2.5" fill="none" stroke="#000" stroke-width="1.1"/>
<path d="M1531.00 779.40 H1586.00" stroke="#9a9a9a" stroke-width="0.6"/>
<text x="1534.75" y="776.00" font-size="5.5" text-anchor="start" fill="#000" fill-opacity="0.6" stroke="#000" stroke-opacity="0.25" stroke-width="0.66" >Roughness</text><text x="1534.30" y="775.40" font-size="5.5" text-anchor="start" fill="#e6e6e6" stroke="#e6e6e6" stroke-width="0.06" >Roughness</text>
<text x="1583.75" y="776.00" font-size="5.5" text-anchor="end" fill="#000" fill-opacity="0.6" stroke="#000" stroke-opacity="0.25" stroke-width="0.66" >0.700</text><text x="1583.30" y="775.40" font-size="5.5" text-anchor="end" fill="#e6e6e6" stroke="#e6e6e6" stroke-width="0.06" >0.700</text>
<rect x="1529.00" y="780.80" width="59.00" height="10" rx="2.5" fill="url(#gfield)" stroke="#000" stroke-width="1.1"/>
<path d="M1531.00 791.80 H1586.00" stroke="#9a9a9a" stroke-width="0.6"/>
<text x="1538.25" y="788.40" font-size="5.5" text-anchor="start" fill="#000" fill-opacity="0.6" stroke="#000" stroke-opacity="0.25" stroke-width="0.66" >Distortion</text><text x="1537.80" y="787.80" font-size="5.5" text-anchor="start" fill="#e6e6e6" stroke="#e6e6e6" stroke-width="0.06" >Distortion</text>
<text x="1580.25" y="788.40" font-size="5.5" text-anchor="end" fill="#000" fill-opacity="0.6" stroke="#000" stroke-opacity="0.25" stroke-width="0.66" >0.000</text><text x="1579.80" y="787.80" font-size="5.5" text-anchor="end" fill="#e6e6e6" stroke="#e6e6e6" stroke-width="0.06" >0.000</text>
<circle cx="1594.00" cy="691.60" r="2.35" fill="#b0b0b0" stroke="#0d0d0d" stroke-width="0.8"/>
<circle cx="1594.00" cy="704.50" r="2.35" fill="#c7c729" stroke="#0d0d0d" stroke-width="0.8"/>
<circle cx="1523.00" cy="736.00" r="2.35" fill="#6363c7" stroke="#0d0d0d" stroke-width="0.8"/>
<circle cx="1523.00" cy="747.80" r="2.35" fill="#b0b0b0" stroke="#0d0d0d" stroke-width="0.8"/>
<circle cx="1523.00" cy="760.80" r="2.35" fill="#b0b0b0" stroke="#0d0d0d" stroke-width="0.8"/>
<circle cx="1523.00" cy="773.40" r="2.35" fill="#b0b0b0" stroke="#0d0d0d" stroke-width="0.8"/>
<circle cx="1523.00" cy="785.80" r="2.35" fill="#b0b0b0" stroke="#0d0d0d" stroke-width="0.8"/>
<rect x="1636.30" y="512.60" width="72.70" height="99.40" rx="4" fill="#000" opacity="0.55" filter="url(#shadow)"/>
<path d="M1637.30 513.80 Q1637.30 512.60 1638.50 512.60 H1706.80 Q1708.00 512.60 1708.00 513.80 V608.80 Q1708.00 610.00 1706.80 610.00 H1638.50 Q1637.30 610.00 1637.30 608.80 Z" fill="#3d3d3d"/>
<path d="M1637.30 523.60 V513.80 Q1637.30 512.60 1638.50 512.60 H1706.80 Q1708.00 512.60 1708.00 513.80 V523.60 Z" fill="#6a58b0"/>
<path d="M1643.00 517.20 H1646.20 L1644.60 519.90 Z" fill="#e8e8e8"/>
<text x="1650.65" y="520.60" font-size="5.5" text-anchor="start" fill="#000" fill-opacity="0.6" stroke="#000" stroke-opacity="0.25" stroke-width="0.66" >Bump</text><text x="1650.20" y="520.00" font-size="5.5" text-anchor="start" fill="#ececec" stroke="#ececec" stroke-width="0.06" >Bump</text>
<text x="1701.25" y="534.70" font-size="5.5" text-anchor="end" fill="#000" fill-opacity="0.6" stroke="#000" stroke-opacity="0.25" stroke-width="0.66" >Normal</text><text x="1700.80" y="534.10" font-size="5.5" text-anchor="end" fill="#dedede" stroke="#dedede" stroke-width="0.06" >Normal</text>
<rect x="1643.30" y="544.30" width="9" height="9" rx="2" fill="url(#gcheck)" stroke="#000" stroke-width="1.2"/>
<path d="M1644.50 554.30 H1651.10" stroke="#a0a0a0" stroke-width="0.7"/>
<text x="1654.25" y="551.30" font-size="5.5" text-anchor="start" fill="#000" fill-opacity="0.6" stroke="#000" stroke-opacity="0.25" stroke-width="0.66" >Invert</text><text x="1653.80" y="550.70" font-size="5.5" text-anchor="start" fill="#e6e6e6" stroke="#e6e6e6" stroke-width="0.06" >Invert</text>
<text x="1644.75" y="565.70" font-size="5.5" text-anchor="start" fill="#000" fill-opacity="0.6" stroke="#000" stroke-opacity="0.25" stroke-width="0.66" >Strength</text><text x="1644.30" y="565.10" font-size="5.5" text-anchor="start" fill="#e0e0e0" stroke="#e0e0e0" stroke-width="0.06" >Strength</text>
<rect x="1643.30" y="571.10" width="58.70" height="10" rx="2.5" fill="url(#gfield)" stroke="#000" stroke-width="1.1"/>
<path d="M1645.30 582.10 H1700.00" stroke="#9a9a9a" stroke-width="0.6"/>
<text x="1652.55" y="578.70" font-size="5.5" text-anchor="start" fill="#000" fill-opacity="0.6" stroke="#000" stroke-opacity="0.25" stroke-width="0.66" >Distance</text><text x="1652.10" y="578.10" font-size="5.5" text-anchor="start" fill="#e6e6e6" stroke="#e6e6e6" stroke-width="0.06" >Distance</text>
<text x="1694.25" y="578.70" font-size="5.5" text-anchor="end" fill="#000" fill-opacity="0.6" stroke="#000" stroke-opacity="0.25" stroke-width="0.66" >0.550</text><text x="1693.80" y="578.10" font-size="5.5" text-anchor="end" fill="#e6e6e6" stroke="#e6e6e6" stroke-width="0.06" >0.550</text>
<text x="1644.75" y="591.00" font-size="5.5" text-anchor="start" fill="#000" fill-opacity="0.6" stroke="#000" stroke-opacity="0.25" stroke-width="0.66" >Height</text><text x="1644.30" y="590.40" font-size="5.5" text-anchor="start" fill="#e0e0e0" stroke="#e0e0e0" stroke-width="0.06" >Height</text>
<text x="1644.75" y="603.50" font-size="5.5" text-anchor="start" fill="#000" fill-opacity="0.6" stroke="#000" stroke-opacity="0.25" stroke-width="0.66" >Normal</text><text x="1644.30" y="602.90" font-size="5.5" text-anchor="start" fill="#e0e0e0" stroke="#e0e0e0" stroke-width="0.06" >Normal</text>
<circle cx="1708.00" cy="532.20" r="2.35" fill="#6363c7" stroke="#0d0d0d" stroke-width="0.8"/>
<circle cx="1637.30" cy="563.20" r="2.35" fill="#b0b0b0" stroke="#0d0d0d" stroke-width="0.8"/>
<circle cx="1637.30" cy="576.10" r="2.35" fill="#b0b0b0" stroke="#0d0d0d" stroke-width="0.8"/>
<circle cx="1637.30" cy="588.50" r="2.35" fill="#b0b0b0" stroke="#0d0d0d" stroke-width="0.8"/>
<circle cx="1637.30" cy="601.00" r="2.35" fill="#6363c7" stroke="#0d0d0d" stroke-width="0.8"/>
<rect x="1739.00" y="387.00" width="123.50" height="351.30" rx="4" fill="#000" opacity="0.55" filter="url(#shadow)"/>
<path d="M1740.00 388.20 Q1740.00 387.00 1741.20 387.00 H1860.30 Q1861.50 387.00 1861.50 388.20 V735.10 Q1861.50 736.30 1860.30 736.30 H1741.20 Q1740.00 736.30 1740.00 735.10 Z" fill="#3d3d3d"/>
<path d="M1740.00 398.00 V388.20 Q1740.00 387.00 1741.20 387.00 H1860.30 Q1861.50 387.00 1861.50 388.20 V398.00 Z" fill="#4c8f4b"/>
<path d="M1745.70 391.60 H1748.90 L1747.30 394.30 Z" fill="#e8e8e8"/>
<text x="1753.35" y="395.00" font-size="5.5" text-anchor="start" fill="#000" fill-opacity="0.6" stroke="#000" stroke-opacity="0.25" stroke-width="0.66" >Principled BSDF</text><text x="1752.90" y="394.40" font-size="5.5" text-anchor="start" fill="#ececec" stroke="#ececec" stroke-width="0.06" >Principled BSDF</text>
<text x="1854.75" y="408.90" font-size="5.5" text-anchor="end" fill="#000" fill-opacity="0.6" stroke="#000" stroke-opacity="0.25" stroke-width="0.66" >BSDF</text><text x="1854.30" y="408.30" font-size="5.5" text-anchor="end" fill="#dedede" stroke="#dedede" stroke-width="0.06" >BSDF</text>
<rect x="1746.00" y="418.40" width="109.50" height="11" rx="4" fill="url(#gdrop)" stroke="#000" stroke-width="1"/>
<path d="M1749.00 430.30 H1852.50" stroke="#9a9a9a" stroke-width="0.7"/>
<text x="1750.45" y="426.40" font-size="5.5" text-anchor="start" fill="#000" fill-opacity="0.6" stroke="#000" stroke-opacity="0.25" stroke-width="0.66" >GGX</text><text x="1750.00" y="425.80" font-size="5.5" text-anchor="start" fill="#dddddd" stroke="#dddddd" stroke-width="0.06" >GGX</text>
<path d="M1848.80 423.40 L1850.50 425.10 L1852.20 423.40" stroke="#e8e8e8" stroke-width="0.95" fill="none"/>
<rect x="1746.00" y="432.40" width="109.50" height="11" rx="4" fill="url(#gdrop)" stroke="#000" stroke-width="1"/>
<path d="M1749.00 444.30 H1852.50" stroke="#9a9a9a" stroke-width="0.7"/>
<text x="1750.45" y="440.40" font-size="5.5" text-anchor="start" fill="#000" fill-opacity="0.6" stroke="#000" stroke-opacity="0.25" stroke-width="0.66" >Christensen-Burley</text><text x="1750.00" y="439.80" font-size="5.5" text-anchor="start" fill="#dddddd" stroke="#dddddd" stroke-width="0.06" >Christensen-Burley</text>
<path d="M1848.80 437.40 L1850.50 439.10 L1852.20 437.40" stroke="#e8e8e8" stroke-width="0.95" fill="none"/>
<text x="1747.45" y="453.60" font-size="5.5" text-anchor="start" fill="#000" fill-opacity="0.6" stroke="#000" stroke-opacity="0.25" stroke-width="0.66" >Base Color</text><text x="1747.00" y="453.00" font-size="5.5" text-anchor="start" fill="#e0e0e0" stroke="#e0e0e0" stroke-width="0.06" >Base Color</text>
<rect x="1746.00" y="458.70" width="109.50" height="10" rx="2.5" fill="url(#gfield)" stroke="#000" stroke-width="1.1"/>
<path d="M1748.00 469.70 H1853.50" stroke="#9a9a9a" stroke-width="0.6"/>
<text x="1751.75" y="466.30" font-size="5.5" text-anchor="start" fill="#000" fill-opacity="0.6" stroke="#000" stroke-opacity="0.25" stroke-width="0.66" >Subsurface</text><text x="1751.30" y="465.70" font-size="5.5" text-anchor="start" fill="#e6e6e6" stroke="#e6e6e6" stroke-width="0.06" >Subsurface</text>
<text x="1851.25" y="466.30" font-size="5.5" text-anchor="end" fill="#000" fill-opacity="0.6" stroke="#000" stroke-opacity="0.25" stroke-width="0.66" >0.000</text><text x="1850.80" y="465.70" font-size="5.5" text-anchor="end" fill="#e6e6e6" stroke="#e6e6e6" stroke-width="0.06" >0.000</text>
<rect x="1746.00" y="471.20" width="109.50" height="11" rx="4" fill="url(#gdrop)" stroke="#000" stroke-width="1"/>
<path d="M1749.00 483.10 H1852.50" stroke="#9a9a9a" stroke-width="0.7"/>
<text x="1750.45" y="479.20" font-size="5.5" text-anchor="start" fill="#000" fill-opacity="0.6" stroke="#000" stroke-opacity="0.25" stroke-width="0.66" >Subsurface Radius</text><text x="1750.00" y="478.60" font-size="5.5" text-anchor="start" fill="#dddddd" stroke="#dddddd" stroke-width="0.06" >Subsurface Radius</text>
<path d="M1848.80 476.20 L1850.50 477.90 L1852.20 476.20" stroke="#e8e8e8" stroke-width="0.95" fill="none"/>
<text x="1747.45" y="491.90" font-size="5.5" text-anchor="start" fill="#000" fill-opacity="0.6" stroke="#000" stroke-opacity="0.25" stroke-width="0.66" >Subsurface Color</text><text x="1747.00" y="491.30" font-size="5.5" text-anchor="start" fill="#e0e0e0" stroke="#e0e0e0" stroke-width="0.06" >Subsurface Color</text>
<rect x="1746.00" y="496.60" width="109.50" height="10" rx="2.5" fill="url(#gfield)" stroke="#000" stroke-width="1.1"/>
<path d="M1748.00 507.60 H1853.50" stroke="#9a9a9a" stroke-width="0.6"/>
<text x="1751.75" y="504.20" font-size="5.5" text-anchor="start" fill="#000" fill-opacity="0.6" stroke="#000" stroke-opacity="0.25" stroke-width="0.66" >Metallic</text><text x="1751.30" y="503.60" font-size="5.5" text-anchor="start" fill="#e6e6e6" stroke="#e6e6e6" stroke-width="0.06" >Metallic</text>
<text x="1851.25" y="504.20" font-size="5.5" text-anchor="end" fill="#000" fill-opacity="0.6" stroke="#000" stroke-opacity="0.25" stroke-width="0.66" >0.000</text><text x="1850.80" y="503.60" font-size="5.5" text-anchor="end" fill="#e6e6e6" stroke="#e6e6e6" stroke-width="0.06" >0.000</text>
<rect x="1746.00" y="509.70" width="109.50" height="10" rx="2.5" fill="url(#gfield)" stroke="#000" stroke-width="1.1"/>
<clipPath id="cp629"><rect x="1746.00" y="509.70" width="109.50" height="10" rx="2.5"/></clipPath>
<rect x="1746.00" y="509.70" width="54.75" height="10" fill="#4772b3" clip-path="url(#cp629)"/>
<rect x="1746.00" y="509.70" width="109.50" height="10" rx="2.5" fill="none" stroke="#000" stroke-width="1.1"/>
<path d="M1748.00 520.70 H1853.50" stroke="#9a9a9a" stroke-width="0.6"/>
<text x="1751.75" y="517.30" font-size="5.5" text-anchor="start" fill="#000" fill-opacity="0.6" stroke="#000" stroke-opacity="0.25" stroke-width="0.66" >Specular</text><text x="1751.30" y="516.70" font-size="5.5" text-anchor="start" fill="#e6e6e6" stroke="#e6e6e6" stroke-width="0.06" >Specular</text>
<text x="1851.25" y="517.30" font-size="5.5" text-anchor="end" fill="#000" fill-opacity="0.6" stroke="#000" stroke-opacity="0.25" stroke-width="0.66" >0.500</text><text x="1850.80" y="516.70" font-size="5.5" text-anchor="end" fill="#e6e6e6" stroke="#e6e6e6" stroke-width="0.06" >0.500</text>
<rect x="1746.00" y="521.90" width="109.50" height="10" rx="2.5" fill="url(#gfield)" stroke="#000" stroke-width="1.1"/>
<path d="M1748.00 532.90 H1853.50" stroke="#9a9a9a" stroke-width="0.6"/>
<text x="1751.75" y="529.50" font-size="5.5" text-anchor="start" fill="#000" fill-opacity="0.6" stroke="#000" stroke-opacity="0.25" stroke-width="0.66" >Specular Tint</text><text x="1751.30" y="528.90" font-size="5.5" text-anchor="start" fill="#e6e6e6" stroke="#e6e6e6" stroke-width="0.06" >Specular Tint</text>
<text x="1851.25" y="529.50" font-size="5.5" text-anchor="end" fill="#000" fill-opacity="0.6" stroke="#000" stroke-opacity="0.25" stroke-width="0.66" >0.000</text><text x="1850.80" y="528.90" font-size="5.5" text-anchor="end" fill="#e6e6e6" stroke="#e6e6e6" stroke-width="0.06" >0.000</text>
<rect x="1746.00" y="534.50" width="109.50" height="10" rx="2.5" fill="url(#gfield)" stroke="#000" stroke-width="1.1"/>
<clipPath id="cp640"><rect x="1746.00" y="534.50" width="109.50" height="10" rx="2.5"/></clipPath>
<rect x="1746.00" y="534.50" width="87.60" height="10" fill="#4772b3" clip-path="url(#cp640)"/>
<rect x="1746.00" y="534.50" width="109.50" height="10" rx="2.5" fill="none" stroke="#000" stroke-width="1.1"/>
<path d="M1748.00 545.50 H1853.50" stroke="#9a9a9a" stroke-width="0.6"/>
<text x="1751.75" y="542.10" font-size="5.5" text-anchor="start" fill="#000" fill-opacity="0.6" stroke="#000" stroke-opacity="0.25" stroke-width="0.66" >Roughness</text><text x="1751.30" y="541.50" font-size="5.5" text-anchor="start" fill="#e6e6e6" stroke="#e6e6e6" stroke-width="0.06" >Roughness</text>
<text x="1851.25" y="542.10" font-size="5.5" text-anchor="end" fill="#000" fill-opacity="0.6" stroke="#000" stroke-opacity="0.25" stroke-width="0.66" >0.800</text><text x="1850.80" y="541.50" font-size="5.5" text-anchor="end" fill="#e6e6e6" stroke="#e6e6e6" stroke-width="0.06" >0.800</text>
<rect x="1746.00" y="546.70" width="109.50" height="10" rx="2.5" fill="url(#gfield)" stroke="#000" stroke-width="1.1"/>
<path d="M1748.00 557.70 H1853.50" stroke="#9a9a9a" stroke-width="0.6"/>
<text x="1751.75" y="554.30" font-size="5.5" text-anchor="start" fill="#000" fill-opacity="0.6" stroke="#000" stroke-opacity="0.25" stroke-width="0.66" >Anisotropic</text><text x="1751.30" y="553.70" font-size="5.5" text-anchor="start" fill="#e6e6e6" stroke="#e6e6e6" stroke-width="0.06" >Anisotropic</text>
<text x="1851.25" y="554.30" font-size="5.5" text-anchor="end" fill="#000" fill-opacity="0.6" stroke="#000" stroke-opacity="0.25" stroke-width="0.66" >0.000</text><text x="1850.80" y="553.70" font-size="5.5" text-anchor="end" fill="#e6e6e6" stroke="#e6e6e6" stroke-width="0.06" >0.000</text>
<rect x="1746.00" y="559.70" width="109.50" height="10" rx="2.5" fill="url(#gfield)" stroke="#000" stroke-width="1.1"/>
<path d="M1748.00 570.70 H1853.50" stroke="#9a9a9a" stroke-width="0.6"/>
<text x="1751.75" y="567.30" font-size="5.5" text-anchor="start" fill="#000" fill-opacity="0.6" stroke="#000" stroke-opacity="0.25" stroke-width="0.66" >Anisotropic Rotation</text><text x="1751.30" y="566.70" font-size="5.5" text-anchor="start" fill="#e6e6e6" stroke="#e6e6e6" stroke-width="0.06" >Anisotropic Rotation</text>
<text x="1851.25" y="567.30" font-size="5.5" text-anchor="end" fill="#000" fill-opacity="0.6" stroke="#000" stroke-opacity="0.25" stroke-width="0.66" >0.000</text><text x="1850.80" y="566.70" font-size="5.5" text-anchor="end" fill="#e6e6e6" stroke="#e6e6e6" stroke-width="0.06" >0.000</text>
<rect x="1746.00" y="571.90" width="109.50" height="10" rx="2.5" fill="url(#gfield)" stroke="#000" stroke-width="1.1"/>
<clipPath id="cp655"><rect x="1746.00" y="571.90" width="109.50" height="10" rx="2.5"/></clipPath>
<rect x="1746.00" y="571.90" width="109.50" height="10" fill="#4772b3" clip-path="url(#cp655)"/>
<rect x="1746.00" y="571.90" width="109.50" height="10" rx="2.5" fill="none" stroke="#000" stroke-width="1.1"/>
<path d="M1748.00 582.90 H1853.50" stroke="#9a9a9a" stroke-width="0.6"/>
<text x="1751.75" y="579.50" font-size="5.5" text-anchor="start" fill="#000" fill-opacity="0.6" stroke="#000" stroke-opacity="0.25" stroke-width="0.66" >Sheen</text><text x="1751.30" y="578.90" font-size="5.5" text-anchor="start" fill="#e6e6e6" stroke="#e6e6e6" stroke-width="0.06" >Sheen</text>
<text x="1851.25" y="579.50" font-size="5.5" text-anchor="end" fill="#000" fill-opacity="0.6" stroke="#000" stroke-opacity="0.25" stroke-width="0.66" >1.000</text><text x="1850.80" y="578.90" font-size="5.5" text-anchor="end" fill="#e6e6e6" stroke="#e6e6e6" stroke-width="0.06" >1.000</text>
<rect x="1746.00" y="584.60" width="109.50" height="10" rx="2.5" fill="url(#gfield)" stroke="#000" stroke-width="1.1"/>
<clipPath id="cp662"><rect x="1746.00" y="584.60" width="109.50" height="10" rx="2.5"/></clipPath>
<rect x="1746.00" y="584.60" width="54.75" height="10" fill="#4772b3" clip-path="url(#cp662)"/>
<rect x="1746.00" y="584.60" width="109.50" height="10" rx="2.5" fill="none" stroke="#000" stroke-width="1.1"/>
<path d="M1748.00 595.60 H1853.50" stroke="#9a9a9a" stroke-width="0.6"/>
<text x="1751.75" y="592.20" font-size="5.5" text-anchor="start" fill="#000" fill-opacity="0.6" stroke="#000" stroke-opacity="0.25" stroke-width="0.66" >Sheen Tint</text><text x="1751.30" y="591.60" font-size="5.5" text-anchor="start" fill="#e6e6e6" stroke="#e6e6e6" stroke-width="0.06" >Sheen Tint</text>
<text x="1851.25" y="592.20" font-size="5.5" text-anchor="end" fill="#000" fill-opacity="0.6" stroke="#000" stroke-opacity="0.25" stroke-width="0.66" >0.500</text><text x="1850.80" y="591.60" font-size="5.5" text-anchor="end" fill="#e6e6e6" stroke="#e6e6e6" stroke-width="0.06" >0.500</text>
<rect x="1746.00" y="596.80" width="109.50" height="10" rx="2.5" fill="url(#gfield)" stroke="#000" stroke-width="1.1"/>
<path d="M1748.00 607.80 H1853.50" stroke="#9a9a9a" stroke-width="0.6"/>
<text x="1751.75" y="604.40" font-size="5.5" text-anchor="start" fill="#000" fill-opacity="0.6" stroke="#000" stroke-opacity="0.25" stroke-width="0.66" >Clearcoat</text><text x="1751.30" y="603.80" font-size="5.5" text-anchor="start" fill="#e6e6e6" stroke="#e6e6e6" stroke-width="0.06" >Clearcoat</text>
<text x="1851.25" y="604.40" font-size="5.5" text-anchor="end" fill="#000" fill-opacity="0.6" stroke="#000" stroke-opacity="0.25" stroke-width="0.66" >0.000</text><text x="1850.80" y="603.80" font-size="5.5" text-anchor="end" fill="#e6e6e6" stroke="#e6e6e6" stroke-width="0.06" >0.000</text>
<rect x="1746.00" y="609.80" width="109.50" height="10" rx="2.5" fill="url(#gfield)" stroke="#000" stroke-width="1.1"/>
<clipPath id="cp673"><rect x="1746.00" y="609.80" width="109.50" height="10" rx="2.5"/></clipPath>
<rect x="1746.00" y="609.80" width="3.28" height="10" fill="#4772b3" clip-path="url(#cp673)"/>
<rect x="1746.00" y="609.80" width="109.50" height="10" rx="2.5" fill="none" stroke="#000" stroke-width="1.1"/>
<path d="M1748.00 620.80 H1853.50" stroke="#9a9a9a" stroke-width="0.6"/>
<text x="1751.75" y="617.40" font-size="5.5" text-anchor="start" fill="#000" fill-opacity="0.6" stroke="#000" stroke-opacity="0.25" stroke-width="0.66" >Clearcoat Roughness</text><text x="1751.30" y="616.80" font-size="5.5" text-anchor="start" fill="#e6e6e6" stroke="#e6e6e6" stroke-width="0.06" >Clearcoat Roughness</text>
<text x="1851.25" y="617.40" font-size="5.5" text-anchor="end" fill="#000" fill-opacity="0.6" stroke="#000" stroke-opacity="0.25" stroke-width="0.66" >0.030</text><text x="1850.80" y="616.80" font-size="5.5" text-anchor="end" fill="#e6e6e6" stroke="#e6e6e6" stroke-width="0.06" >0.030</text>
<rect x="1746.00" y="622.10" width="109.50" height="10" rx="2.5" fill="url(#gfield)" stroke="#000" stroke-width="1.1"/>
<path d="M1748.00 633.10 H1853.50" stroke="#9a9a9a" stroke-width="0.6"/>
<text x="1755.25" y="629.70" font-size="5.5" text-anchor="start" fill="#000" fill-opacity="0.6" stroke="#000" stroke-opacity="0.25" stroke-width="0.66" >IOR</text><text x="1754.80" y="629.10" font-size="5.5" text-anchor="start" fill="#e6e6e6" stroke="#e6e6e6" stroke-width="0.06" >IOR</text>
<text x="1847.75" y="629.70" font-size="5.5" text-anchor="end" fill="#000" fill-opacity="0.6" stroke="#000" stroke-opacity="0.25" stroke-width="0.66" >1.450</text><text x="1847.30" y="629.10" font-size="5.5" text-anchor="end" fill="#e6e6e6" stroke="#e6e6e6" stroke-width="0.06" >1.450</text>
<rect x="1746.00" y="634.70" width="109.50" height="10" rx="2.5" fill="url(#gfield)" stroke="#000" stroke-width="1.1"/>
<path d="M1748.00 645.70 H1853.50" stroke="#9a9a9a" stroke-width="0.6"/>
<text x="1751.75" y="642.30" font-size="5.5" text-anchor="start" fill="#000" fill-opacity="0.6" stroke="#000" stroke-opacity="0.25" stroke-width="0.66" >Transmission</text><text x="1751.30" y="641.70" font-size="5.5" text-anchor="start" fill="#e6e6e6" stroke="#e6e6e6" stroke-width="0.06" >Transmission</text>
<text x="1851.25" y="642.30" font-size="5.5" text-anchor="end" fill="#000" fill-opacity="0.6" stroke="#000" stroke-opacity="0.25" stroke-width="0.66" >0.000</text><text x="1850.80" y="641.70" font-size="5.5" text-anchor="end" fill="#e6e6e6" stroke="#e6e6e6" stroke-width="0.06" >0.000</text>
<rect x="1746.00" y="646.80" width="109.50" height="10" rx="2.5" fill="url(#gfield)" stroke="#000" stroke-width="1.1"/>
<path d="M1748.00 657.80 H1853.50" stroke="#9a9a9a" stroke-width="0.6"/>
<text x="1751.75" y="654.40" font-size="5.5" text-anchor="start" fill="#000" fill-opacity="0.6" stroke="#000" stroke-opacity="0.25" stroke-width="0.66" >Transmission Roughness</text><text x="1751.30" y="653.80" font-size="5.5" text-anchor="start" fill="#e6e6e6" stroke="#e6e6e6" stroke-width="0.06" >Transmission Roughness</text>
<text x="1851.25" y="654.40" font-size="5.5" text-anchor="end" fill="#000" fill-opacity="0.6" stroke="#000" stroke-opacity="0.25" stroke-width="0.66" >0.000</text><text x="1850.80" y="653.80" font-size="5.5" text-anchor="end" fill="#e6e6e6" stroke="#e6e6e6" stroke-width="0.06" >0.000</text>
<text x="1747.45" y="667.50" font-size="5.5" text-anchor="start" fill="#000" fill-opacity="0.6" stroke="#000" stroke-opacity="0.25" stroke-width="0.66" >Emission</text><text x="1747.00" y="666.90" font-size="5.5" text-anchor="start" fill="#e0e0e0" stroke="#e0e0e0" stroke-width="0.06" >Emission</text>
<rect x="1746.00" y="672.60" width="109.50" height="10" rx="2.5" fill="url(#gfield)" stroke="#000" stroke-width="1.1"/>
<path d="M1748.00 683.60 H1853.50" stroke="#9a9a9a" stroke-width="0.6"/>
<text x="1755.25" y="680.20" font-size="5.5" text-anchor="start" fill="#000" fill-opacity="0.6" stroke="#000" stroke-opacity="0.25" stroke-width="0.66" >Emission Strength</text><text x="1754.80" y="679.60" font-size="5.5" text-anchor="start" fill="#e6e6e6" stroke="#e6e6e6" stroke-width="0.06" >Emission Strength</text>
<text x="1847.75" y="680.20" font-size="5.5" text-anchor="end" fill="#000" fill-opacity="0.6" stroke="#000" stroke-opacity="0.25" stroke-width="0.66" >1.000</text><text x="1847.30" y="679.60" font-size="5.5" text-anchor="end" fill="#e6e6e6" stroke="#e6e6e6" stroke-width="0.06" >1.000</text>
<rect x="1746.00" y="685.00" width="109.50" height="10" rx="2.5" fill="url(#gfield)" stroke="#000" stroke-width="1.1"/>
<clipPath id="cp697"><rect x="1746.00" y="685.00" width="109.50" height="10" rx="2.5"/></clipPath>
<rect x="1746.00" y="685.00" width="109.50" height="10" fill="#4772b3" clip-path="url(#cp697)"/>
<rect x="1746.00" y="685.00" width="109.50" height="10" rx="2.5" fill="none" stroke="#000" stroke-width="1.1"/>
<path d="M1748.00 696.00 H1853.50" stroke="#9a9a9a" stroke-width="0.6"/>
<text x="1751.75" y="692.60" font-size="5.5" text-anchor="start" fill="#000" fill-opacity="0.6" stroke="#000" stroke-opacity="0.25" stroke-width="0.66" >Alpha</text><text x="1751.30" y="692.00" font-size="5.5" text-anchor="start" fill="#e6e6e6" stroke="#e6e6e6" stroke-width="0.06" >Alpha</text>
<text x="1851.25" y="692.60" font-size="5.5" text-anchor="end" fill="#000" fill-opacity="0.6" stroke="#000" stroke-opacity="0.25" stroke-width="0.66" >1.000</text><text x="1850.80" y="692.00" font-size="5.5" text-anchor="end" fill="#e6e6e6" stroke="#e6e6e6" stroke-width="0.06" >1.000</text>
<text x="1747.45" y="704.80" font-size="5.5" text-anchor="start" fill="#000" fill-opacity="0.6" stroke="#000" stroke-opacity="0.25" stroke-width="0.66" >Normal</text><text x="1747.00" y="704.20" font-size="5.5" text-anchor="start" fill="#e0e0e0" stroke="#e0e0e0" stroke-width="0.06" >Normal</text>
<text x="1747.45" y="717.50" font-size="5.5" text-anchor="start" fill="#000" fill-opacity="0.6" stroke="#000" stroke-opacity="0.25" stroke-width="0.66" >Clearcoat Normal</text><text x="1747.00" y="716.90" font-size="5.5" text-anchor="start" fill="#e0e0e0" stroke="#e0e0e0" stroke-width="0.06" >Clearcoat Normal</text>
<text x="1747.45" y="730.10" font-size="5.5" text-anchor="start" fill="#000" fill-opacity="0.6" stroke="#000" stroke-opacity="0.25" stroke-width="0.66" >Tangent</text><text x="1747.00" y="729.50" font-size="5.5" text-anchor="start" fill="#e0e0e0" stroke="#e0e0e0" stroke-width="0.06" >Tangent</text>
<circle cx="1861.50" cy="406.40" r="2.35" fill="#63c763" stroke="#0d0d0d" stroke-width="0.8"/>
<circle cx="1740.00" cy="451.10" r="2.35" fill="#c7c729" stroke="#0d0d0d" stroke-width="0.8"/>
<circle cx="1740.00" cy="463.70" r="2.35" fill="#b0b0b0" stroke="#0d0d0d" stroke-width="0.8"/>
<circle cx="1740.00" cy="476.70" r="2.35" fill="#6363c7" stroke="#0d0d0d" stroke-width="0.8"/>
<circle cx="1740.00" cy="489.40" r="2.35" fill="#c7c729" stroke="#0d0d0d" stroke-width="0.8"/>
<circle cx="1740.00" cy="501.60" r="2.35" fill="#b0b0b0" stroke="#0d0d0d" stroke-width="0.8"/>
<circle cx="1740.00" cy="514.70" r="2.35" fill="#b0b0b0" stroke="#0d0d0d" stroke-width="0.8"/>
<circle cx="1740.00" cy="526.90" r="2.35" fill="#b0b0b0" stroke="#0d0d0d" stroke-width="0.8"/>
<circle cx="1740.00" cy="539.50" r="2.35" fill="#b0b0b0" stroke="#0d0d0d" stroke-width="0.8"/>
<circle cx="1740.00" cy="551.70" r="2.35" fill="#b0b0b0" stroke="#0d0d0d" stroke-width="0.8"/>
<circle cx="1740.00" cy="564.70" r="2.35" fill="#b0b0b0" stroke="#0d0d0d" stroke-width="0.8"/>
<circle cx="1740.00" cy="576.90" r="2.35" fill="#b0b0b0" stroke="#0d0d0d" stroke-width="0.8"/>
<circle cx="1740.00" cy="589.60" r="2.35" fill="#b0b0b0" stroke="#0d0d0d" stroke-width="0.8"/>
<circle cx="1740.00" cy="601.80" r="2.35" fill="#b0b0b0" stroke="#0d0d0d" stroke-width="0.8"/>
<circle cx="1740.00" cy="614.80" r="2.35" fill="#b0b0b0" stroke="#0d0d0d" stroke-width="0.8"/>
<circle cx="1740.00" cy="627.10" r="2.35" fill="#b0b0b0" stroke="#0d0d0d" stroke-width="0.8"/>
<circle cx="1740.00" cy="639.70" r="2.35" fill="#b0b0b0" stroke="#0d0d0d" stroke-width="0.8"/>
<circle cx="1740.00" cy="651.80" r="2.35" fill="#b0b0b0" stroke="#0d0d0d" stroke-width="0.8"/>
<circle cx="1740.00" cy="665.00" r="2.35" fill="#c7c729" stroke="#0d0d0d" stroke-width="0.8"/>
<circle cx="1740.00" cy="677.60" r="2.35" fill="#b0b0b0" stroke="#0d0d0d" stroke-width="0.8"/>
<circle cx="1740.00" cy="690.00" r="2.35" fill="#b0b0b0" stroke="#0d0d0d" stroke-width="0.8"/>
<circle cx="1740.00" cy="702.30" r="2.35" fill="#6363c7" stroke="#0d0d0d" stroke-width="0.8"/>
<circle cx="1740.00" cy="715.00" r="2.35" fill="#6363c7" stroke="#0d0d0d" stroke-width="0.8"/>
<circle cx="1740.00" cy="727.60" r="2.35" fill="#6363c7" stroke="#0d0d0d" stroke-width="0.8"/>
<rect x="1793" y="485" width="62.5" height="9.4" rx="4" fill="#e6e6e6" stroke="#141414" stroke-width="0.7"/>
<rect x="1792" y="660" width="63.5" height="10.6" rx="4.5" fill="#000" stroke="#141414" stroke-width="0.7"/>
<path d="M1861.5 406.4 L1765 363.4" stroke="#111" stroke-opacity="0.3" stroke-width="3" fill="none"/>
<path d="M1861.5 406.4 L1765 363.4" stroke="#a0a0a0" stroke-opacity="0.55" stroke-width="1.8" fill="none"/>
<circle cx="1861.50" cy="406.40" r="2.35" fill="#63c763" stroke="#0d0d0d" stroke-width="0.8"/>
<rect x="1763" y="361" width="72" height="18.5" rx="9" fill="#000" opacity="0.5" filter="url(#shadow)"/>
<rect x="1763.5" y="361.3" width="70.3" height="17.3" rx="8.6" fill="#862a33"/>
<path d="M1861.5 406.4 L1765 363.4" stroke="#c0c0c0" stroke-opacity="0.22" stroke-width="1.8" fill="none"/>
<path d="M1769.5 368.2 L1772.5 370 L1769.5 371.8 Z" fill="#eee"/>
<text x="1776.45" y="372.60" font-size="5.5" text-anchor="start" textLength="37" lengthAdjust="spacingAndGlyphs" fill="#000" fill-opacity="0.6" stroke="#000" stroke-opacity="0.25" stroke-width="0.66" >Material Output</text><text x="1776.00" y="372.00" font-size="5.5" text-anchor="start" textLength="37" lengthAdjust="spacingAndGlyphs" fill="#f0f0f0" stroke="#f0f0f0" stroke-width="0.06" >Material Output</text>
<path d="M1826 368 v4.5 M1829.3 368 v4.5" stroke="#d23c48" stroke-width="1.4"/>
<circle cx="1765.00" cy="363.20" r="2.35" fill="#63c763" stroke="#0d0d0d" stroke-width="0.8"/>
<circle cx="1764.00" cy="369.60" r="2.35" fill="#63c763" stroke="#0d0d0d" stroke-width="0.8"/>
<circle cx="1765.00" cy="376.20" r="2.35" fill="#6363c7" stroke="#0d0d0d" stroke-width="0.8"/>
</svg>
</body></html>
